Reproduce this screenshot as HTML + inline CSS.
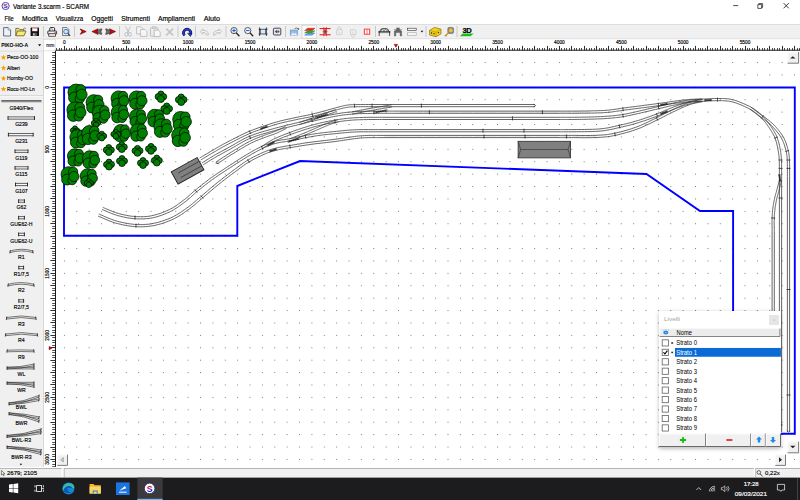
<!DOCTYPE html><html><head><meta charset="utf-8"><title>Variante 3.scarm - SCARM</title><style>
*{margin:0;padding:0;box-sizing:border-box}
html,body{width:800px;height:500px;overflow:hidden;background:#fff;font-family:"Liberation Sans",sans-serif;}
svg{position:absolute;left:0;top:0;font-family:"Liberation Sans",sans-serif;}
</style></head><body>
<svg width="800" height="500" viewBox="0 0 800 500">
<defs><pattern id="grid" x="-10.350" y="12.376" width="12.375" height="12.404" patternUnits="userSpaceOnUse"><rect x="0" y="0" width="1" height="1" fill="#7c7c7c"/></pattern>
<clipPath id="cv"><rect x="55.5" y="51" width="745" height="415.9"/></clipPath>
<linearGradient id="sg" x1="0" y1="0" x2="0" y2="1"><stop offset="0.45" stop-color="#d01818"/><stop offset="0.55" stop-color="#1818d0"/></linearGradient><filter id="sh" x="-10%" y="-10%" width="120%" height="120%"><feGaussianBlur stdDeviation="2"/></filter>
</defs>
<rect x="0" y="0" width="800" height="24" fill="#fff"/>
<rect x="0" y="24" width="800" height="15" fill="#f0f0f0"/>
<rect x="0" y="24" width="800" height="0.8" fill="#d9d9d9"/>
<rect x="0" y="38.6" width="800" height="0.8" fill="#d0d0d0"/>
<rect x="0" y="39.4" width="43.5" height="428" fill="#f0f0f0"/>
<rect x="43.5" y="39.4" width="757" height="11.6" fill="#fff"/>
<rect x="43.5" y="51" width="12" height="416" fill="#fff"/>
<rect x="43.2" y="39.4" width="0.8" height="428" fill="#cfcfcf"/>
<circle cx="5.6" cy="6" r="3.6" fill="#f4f4ff" stroke="#3a3ab0" stroke-width="0.9"/>
<text x="5.60" y="8.32" font-size="6.20" fill="url(#sg)" font-weight="bold" text-anchor="middle" >S</text>
<text x="13.00" y="8.66" font-size="6.60" fill="#000" textLength="76.00" lengthAdjust="spacingAndGlyphs" stroke="#000" stroke-width="0.16" >Variante 3.scarm - SCARM</text>
<path d="M733.2 5.6h5" stroke="#111" stroke-width="0.75" fill="none"/>
<path d="M757.8 4.6h3.8v3.8h-3.8zM758.8 4.6v-1h3.8v3.8h-1" stroke="#111" stroke-width="0.7" fill="none"/>
<path d="M783.6 3.1l5.2 5.2M788.8 3.1l-5.2 5.2" stroke="#111" stroke-width="0.8" fill="none"/>
<text x="4.50" y="20.83" font-size="6.50" fill="#000" textLength="9.30" lengthAdjust="spacingAndGlyphs" stroke="#000" stroke-width="0.16" >File</text>
<text x="22.00" y="20.83" font-size="6.50" fill="#000" textLength="25.50" lengthAdjust="spacingAndGlyphs" stroke="#000" stroke-width="0.16" >Modifica</text>
<text x="55.70" y="20.83" font-size="6.50" fill="#000" textLength="27.60" lengthAdjust="spacingAndGlyphs" stroke="#000" stroke-width="0.16" >Visualizza</text>
<text x="91.20" y="20.83" font-size="6.50" fill="#000" textLength="21.80" lengthAdjust="spacingAndGlyphs" stroke="#000" stroke-width="0.16" >Oggetti</text>
<text x="121.20" y="20.83" font-size="6.50" fill="#000" textLength="28.80" lengthAdjust="spacingAndGlyphs" stroke="#000" stroke-width="0.16" >Strumenti</text>
<text x="158.00" y="20.83" font-size="6.50" fill="#000" textLength="37.00" lengthAdjust="spacingAndGlyphs" stroke="#000" stroke-width="0.16" >Ampliamenti</text>
<text x="203.70" y="20.83" font-size="6.50" fill="#000" textLength="16.30" lengthAdjust="spacingAndGlyphs" stroke="#000" stroke-width="0.16" >Aiuto</text>
<path d="M64.50 50.30v-4.40M76.50 50.30v-4.40M89.50 50.30v-4.40M101.50 50.30v-4.40M113.50 50.30v-4.40M126.50 50.30v-4.40M138.50 50.30v-4.40M151.50 50.30v-4.40M163.50 50.30v-4.40M175.50 50.30v-4.40M188.50 50.30v-4.40M200.50 50.30v-4.40M212.50 50.30v-4.40M225.50 50.30v-4.40M237.50 50.30v-4.40M250.50 50.30v-4.40M262.50 50.30v-4.40M274.50 50.30v-4.40M287.50 50.30v-4.40M299.50 50.30v-4.40M311.50 50.30v-4.40M324.50 50.30v-4.40M336.50 50.30v-4.40M349.50 50.30v-4.40M361.50 50.30v-4.40M373.50 50.30v-4.40M386.50 50.30v-4.40M398.50 50.30v-4.40M410.50 50.30v-4.40M423.50 50.30v-4.40M435.50 50.30v-4.40M448.50 50.30v-4.40M460.50 50.30v-4.40M472.50 50.30v-4.40M485.50 50.30v-4.40M497.50 50.30v-4.40M509.50 50.30v-4.40M522.50 50.30v-4.40M534.50 50.30v-4.40M547.50 50.30v-4.40M559.50 50.30v-4.40M571.50 50.30v-4.40M584.50 50.30v-4.40M596.50 50.30v-4.40M608.50 50.30v-4.40M621.50 50.30v-4.40M633.50 50.30v-4.40M646.50 50.30v-4.40M658.50 50.30v-4.40M670.50 50.30v-4.40M683.50 50.30v-4.40M695.50 50.30v-4.40M707.50 50.30v-4.40M720.50 50.30v-4.40M732.50 50.30v-4.40M745.50 50.30v-4.40M757.50 50.30v-4.40M769.50 50.30v-4.40M782.50 50.30v-4.40M794.50 50.30v-4.40" stroke="#1a1a1a" stroke-width="0.9" fill="none"/>
<path d="M56.50 50.30v-2.30M59.50 50.30v-2.30M61.50 50.30v-2.30M66.50 50.30v-2.30M69.50 50.30v-2.30M71.50 50.30v-2.30M74.50 50.30v-2.30M79.50 50.30v-2.30M81.50 50.30v-2.30M84.50 50.30v-2.30M86.50 50.30v-2.30M91.50 50.30v-2.30M94.50 50.30v-2.30M96.50 50.30v-2.30M99.50 50.30v-2.30M104.50 50.30v-2.30M106.50 50.30v-2.30M108.50 50.30v-2.30M111.50 50.30v-2.30M116.50 50.30v-2.30M118.50 50.30v-2.30M121.50 50.30v-2.30M123.50 50.30v-2.30M128.50 50.30v-2.30M131.50 50.30v-2.30M133.50 50.30v-2.30M136.50 50.30v-2.30M141.50 50.30v-2.30M143.50 50.30v-2.30M146.50 50.30v-2.30M148.50 50.30v-2.30M153.50 50.30v-2.30M155.50 50.30v-2.30M158.50 50.30v-2.30M160.50 50.30v-2.30M165.50 50.30v-2.30M168.50 50.30v-2.30M170.50 50.30v-2.30M173.50 50.30v-2.30M178.50 50.30v-2.30M180.50 50.30v-2.30M183.50 50.30v-2.30M185.50 50.30v-2.30M190.50 50.30v-2.30M193.50 50.30v-2.30M195.50 50.30v-2.30M198.50 50.30v-2.30M203.50 50.30v-2.30M205.50 50.30v-2.30M207.50 50.30v-2.30M210.50 50.30v-2.30M215.50 50.30v-2.30M217.50 50.30v-2.30M220.50 50.30v-2.30M222.50 50.30v-2.30M227.50 50.30v-2.30M230.50 50.30v-2.30M232.50 50.30v-2.30M235.50 50.30v-2.30M240.50 50.30v-2.30M242.50 50.30v-2.30M245.50 50.30v-2.30M247.50 50.30v-2.30M252.50 50.30v-2.30M254.50 50.30v-2.30M257.50 50.30v-2.30M259.50 50.30v-2.30M264.50 50.30v-2.30M267.50 50.30v-2.30M269.50 50.30v-2.30M272.50 50.30v-2.30M277.50 50.30v-2.30M279.50 50.30v-2.30M282.50 50.30v-2.30M284.50 50.30v-2.30M289.50 50.30v-2.30M292.50 50.30v-2.30M294.50 50.30v-2.30M297.50 50.30v-2.30M302.50 50.30v-2.30M304.50 50.30v-2.30M306.50 50.30v-2.30M309.50 50.30v-2.30M314.50 50.30v-2.30M316.50 50.30v-2.30M319.50 50.30v-2.30M321.50 50.30v-2.30M326.50 50.30v-2.30M329.50 50.30v-2.30M331.50 50.30v-2.30M334.50 50.30v-2.30M339.50 50.30v-2.30M341.50 50.30v-2.30M344.50 50.30v-2.30M346.50 50.30v-2.30M351.50 50.30v-2.30M353.50 50.30v-2.30M356.50 50.30v-2.30M358.50 50.30v-2.30M363.50 50.30v-2.30M366.50 50.30v-2.30M368.50 50.30v-2.30M371.50 50.30v-2.30M376.50 50.30v-2.30M378.50 50.30v-2.30M381.50 50.30v-2.30M383.50 50.30v-2.30M388.50 50.30v-2.30M391.50 50.30v-2.30M393.50 50.30v-2.30M396.50 50.30v-2.30M401.50 50.30v-2.30M403.50 50.30v-2.30M405.50 50.30v-2.30M408.50 50.30v-2.30M413.50 50.30v-2.30M415.50 50.30v-2.30M418.50 50.30v-2.30M420.50 50.30v-2.30M425.50 50.30v-2.30M428.50 50.30v-2.30M430.50 50.30v-2.30M433.50 50.30v-2.30M438.50 50.30v-2.30M440.50 50.30v-2.30M443.50 50.30v-2.30M445.50 50.30v-2.30M450.50 50.30v-2.30M452.50 50.30v-2.30M455.50 50.30v-2.30M457.50 50.30v-2.30M462.50 50.30v-2.30M465.50 50.30v-2.30M467.50 50.30v-2.30M470.50 50.30v-2.30M475.50 50.30v-2.30M477.50 50.30v-2.30M480.50 50.30v-2.30M482.50 50.30v-2.30M487.50 50.30v-2.30M490.50 50.30v-2.30M492.50 50.30v-2.30M495.50 50.30v-2.30M500.50 50.30v-2.30M502.50 50.30v-2.30M504.50 50.30v-2.30M507.50 50.30v-2.30M512.50 50.30v-2.30M514.50 50.30v-2.30M517.50 50.30v-2.30M519.50 50.30v-2.30M524.50 50.30v-2.30M527.50 50.30v-2.30M529.50 50.30v-2.30M532.50 50.30v-2.30M537.50 50.30v-2.30M539.50 50.30v-2.30M542.50 50.30v-2.30M544.50 50.30v-2.30M549.50 50.30v-2.30M551.50 50.30v-2.30M554.50 50.30v-2.30M556.50 50.30v-2.30M561.50 50.30v-2.30M564.50 50.30v-2.30M566.50 50.30v-2.30M569.50 50.30v-2.30M574.50 50.30v-2.30M576.50 50.30v-2.30M579.50 50.30v-2.30M581.50 50.30v-2.30M586.50 50.30v-2.30M589.50 50.30v-2.30M591.50 50.30v-2.30M594.50 50.30v-2.30M599.50 50.30v-2.30M601.50 50.30v-2.30M603.50 50.30v-2.30M606.50 50.30v-2.30M611.50 50.30v-2.30M613.50 50.30v-2.30M616.50 50.30v-2.30M618.50 50.30v-2.30M623.50 50.30v-2.30M626.50 50.30v-2.30M628.50 50.30v-2.30M631.50 50.30v-2.30M636.50 50.30v-2.30M638.50 50.30v-2.30M641.50 50.30v-2.30M643.50 50.30v-2.30M648.50 50.30v-2.30M650.50 50.30v-2.30M653.50 50.30v-2.30M655.50 50.30v-2.30M660.50 50.30v-2.30M663.50 50.30v-2.30M665.50 50.30v-2.30M668.50 50.30v-2.30M673.50 50.30v-2.30M675.50 50.30v-2.30M678.50 50.30v-2.30M680.50 50.30v-2.30M685.50 50.30v-2.30M688.50 50.30v-2.30M690.50 50.30v-2.30M693.50 50.30v-2.30M698.50 50.30v-2.30M700.50 50.30v-2.30M702.50 50.30v-2.30M705.50 50.30v-2.30M710.50 50.30v-2.30M712.50 50.30v-2.30M715.50 50.30v-2.30M717.50 50.30v-2.30M722.50 50.30v-2.30M725.50 50.30v-2.30M727.50 50.30v-2.30M730.50 50.30v-2.30M735.50 50.30v-2.30M737.50 50.30v-2.30M740.50 50.30v-2.30M742.50 50.30v-2.30M747.50 50.30v-2.30M749.50 50.30v-2.30M752.50 50.30v-2.30M754.50 50.30v-2.30M759.50 50.30v-2.30M762.50 50.30v-2.30M764.50 50.30v-2.30M767.50 50.30v-2.30M772.50 50.30v-2.30M774.50 50.30v-2.30M777.50 50.30v-2.30M779.50 50.30v-2.30M784.50 50.30v-2.30M787.50 50.30v-2.30M789.50 50.30v-2.30M792.50 50.30v-2.30M797.50 50.30v-2.30M799.50 50.30v-2.30" stroke="#3c3c3c" stroke-width="0.9" fill="none"/>
<rect x="55.4" y="49.75" width="745" height="0.9" fill="#000"/>
<path d="M55.20 62.50h-4.80M55.20 74.50h-4.80M55.20 87.50h-4.80M55.20 99.50h-4.80M55.20 112.50h-4.80M55.20 124.50h-4.80M55.20 136.50h-4.80M55.20 149.50h-4.80M55.20 161.50h-4.80M55.20 174.50h-4.80M55.20 186.50h-4.80M55.20 198.50h-4.80M55.20 211.50h-4.80M55.20 223.50h-4.80M55.20 236.50h-4.80M55.20 248.50h-4.80M55.20 260.50h-4.80M55.20 273.50h-4.80M55.20 285.50h-4.80M55.20 298.50h-4.80M55.20 310.50h-4.80M55.20 322.50h-4.80M55.20 335.50h-4.80M55.20 347.50h-4.80M55.20 360.50h-4.80M55.20 372.50h-4.80M55.20 384.50h-4.80M55.20 397.50h-4.80M55.20 409.50h-4.80M55.20 422.50h-4.80M55.20 434.50h-4.80M55.20 447.50h-4.80M55.20 459.50h-4.80" stroke="#1a1a1a" stroke-width="0.9" fill="none"/>
<path d="M55.20 52.50h-3.00M55.20 55.50h-3.00M55.20 57.50h-3.00M55.20 60.50h-3.00M55.20 64.50h-3.00M55.20 67.50h-3.00M55.20 69.50h-3.00M55.20 72.50h-3.00M55.20 77.50h-3.00M55.20 79.50h-3.00M55.20 82.50h-3.00M55.20 84.50h-3.00M55.20 89.50h-3.00M55.20 92.50h-3.00M55.20 94.50h-3.00M55.20 97.50h-3.00M55.20 102.50h-3.00M55.20 104.50h-3.00M55.20 107.50h-3.00M55.20 109.50h-3.00M55.20 114.50h-3.00M55.20 117.50h-3.00M55.20 119.50h-3.00M55.20 122.50h-3.00M55.20 126.50h-3.00M55.20 129.50h-3.00M55.20 131.50h-3.00M55.20 134.50h-3.00M55.20 139.50h-3.00M55.20 141.50h-3.00M55.20 144.50h-3.00M55.20 146.50h-3.00M55.20 151.50h-3.00M55.20 154.50h-3.00M55.20 156.50h-3.00M55.20 159.50h-3.00M55.20 164.50h-3.00M55.20 166.50h-3.00M55.20 169.50h-3.00M55.20 171.50h-3.00M55.20 176.50h-3.00M55.20 179.50h-3.00M55.20 181.50h-3.00M55.20 184.50h-3.00M55.20 189.50h-3.00M55.20 191.50h-3.00M55.20 193.50h-3.00M55.20 196.50h-3.00M55.20 201.50h-3.00M55.20 203.50h-3.00M55.20 206.50h-3.00M55.20 208.50h-3.00M55.20 213.50h-3.00M55.20 216.50h-3.00M55.20 218.50h-3.00M55.20 221.50h-3.00M55.20 226.50h-3.00M55.20 228.50h-3.00M55.20 231.50h-3.00M55.20 233.50h-3.00M55.20 238.50h-3.00M55.20 241.50h-3.00M55.20 243.50h-3.00M55.20 246.50h-3.00M55.20 251.50h-3.00M55.20 253.50h-3.00M55.20 255.50h-3.00M55.20 258.50h-3.00M55.20 263.50h-3.00M55.20 265.50h-3.00M55.20 268.50h-3.00M55.20 270.50h-3.00M55.20 275.50h-3.00M55.20 278.50h-3.00M55.20 280.50h-3.00M55.20 283.50h-3.00M55.20 288.50h-3.00M55.20 290.50h-3.00M55.20 293.50h-3.00M55.20 295.50h-3.00M55.20 300.50h-3.00M55.20 303.50h-3.00M55.20 305.50h-3.00M55.20 308.50h-3.00M55.20 313.50h-3.00M55.20 315.50h-3.00M55.20 318.50h-3.00M55.20 320.50h-3.00M55.20 325.50h-3.00M55.20 327.50h-3.00M55.20 330.50h-3.00M55.20 332.50h-3.00M55.20 337.50h-3.00M55.20 340.50h-3.00M55.20 342.50h-3.00M55.20 345.50h-3.00M55.20 350.50h-3.00M55.20 352.50h-3.00M55.20 355.50h-3.00M55.20 357.50h-3.00M55.20 362.50h-3.00M55.20 365.50h-3.00M55.20 367.50h-3.00M55.20 370.50h-3.00M55.20 375.50h-3.00M55.20 377.50h-3.00M55.20 380.50h-3.00M55.20 382.50h-3.00M55.20 387.50h-3.00M55.20 389.50h-3.00M55.20 392.50h-3.00M55.20 394.50h-3.00M55.20 399.50h-3.00M55.20 402.50h-3.00M55.20 404.50h-3.00M55.20 407.50h-3.00M55.20 412.50h-3.00M55.20 414.50h-3.00M55.20 417.50h-3.00M55.20 419.50h-3.00M55.20 424.50h-3.00M55.20 427.50h-3.00M55.20 429.50h-3.00M55.20 432.50h-3.00M55.20 437.50h-3.00M55.20 439.50h-3.00M55.20 442.50h-3.00M55.20 444.50h-3.00M55.20 449.50h-3.00M55.20 451.50h-3.00M55.20 454.50h-3.00M55.20 456.50h-3.00M55.20 461.50h-3.00M55.20 464.50h-3.00M55.20 466.50h-3.00" stroke="#3c3c3c" stroke-width="0.9" fill="none"/>
<rect x="55" y="50" width="0.9" height="417" fill="#000"/>
<text x="64.40" y="44.02" font-size="4.80" fill="#000" text-anchor="middle" stroke="#000" stroke-width="0.16" >0</text>
<text x="126.28" y="44.02" font-size="4.80" fill="#000" text-anchor="middle" stroke="#000" stroke-width="0.16" >500</text>
<text x="188.15" y="44.02" font-size="4.80" fill="#000" text-anchor="middle" stroke="#000" stroke-width="0.16" >1000</text>
<text x="250.03" y="44.02" font-size="4.80" fill="#000" text-anchor="middle" stroke="#000" stroke-width="0.16" >1500</text>
<text x="311.90" y="44.02" font-size="4.80" fill="#000" text-anchor="middle" stroke="#000" stroke-width="0.16" >2000</text>
<text x="373.77" y="44.02" font-size="4.80" fill="#000" text-anchor="middle" stroke="#000" stroke-width="0.16" >2500</text>
<text x="435.65" y="44.02" font-size="4.80" fill="#000" text-anchor="middle" stroke="#000" stroke-width="0.16" >3000</text>
<text x="497.52" y="44.02" font-size="4.80" fill="#000" text-anchor="middle" stroke="#000" stroke-width="0.16" >3500</text>
<text x="559.40" y="44.02" font-size="4.80" fill="#000" text-anchor="middle" stroke="#000" stroke-width="0.16" >4000</text>
<text x="621.27" y="44.02" font-size="4.80" fill="#000" text-anchor="middle" stroke="#000" stroke-width="0.16" >4500</text>
<text x="683.15" y="44.02" font-size="4.80" fill="#000" text-anchor="middle" stroke="#000" stroke-width="0.16" >5000</text>
<text x="745.02" y="44.02" font-size="4.80" fill="#000" text-anchor="middle" stroke="#000" stroke-width="0.16" >5500</text>
<g transform="translate(47.2 87.30) rotate(-90)"><text x="0.00" y="1.72" font-size="4.80" fill="#000" text-anchor="middle" stroke="#000" stroke-width="0.16" >0</text></g>
<g transform="translate(47.2 149.32) rotate(-90)"><text x="0.00" y="1.72" font-size="4.80" fill="#000" text-anchor="middle" stroke="#000" stroke-width="0.16" >500</text></g>
<g transform="translate(47.2 211.34) rotate(-90)"><text x="0.00" y="1.72" font-size="4.80" fill="#000" text-anchor="middle" stroke="#000" stroke-width="0.16" >1000</text></g>
<g transform="translate(47.2 273.36) rotate(-90)"><text x="0.00" y="1.72" font-size="4.80" fill="#000" text-anchor="middle" stroke="#000" stroke-width="0.16" >1500</text></g>
<g transform="translate(47.2 335.38) rotate(-90)"><text x="0.00" y="1.72" font-size="4.80" fill="#000" text-anchor="middle" stroke="#000" stroke-width="0.16" >2000</text></g>
<g transform="translate(47.2 397.40) rotate(-90)"><text x="0.00" y="1.72" font-size="4.80" fill="#000" text-anchor="middle" stroke="#000" stroke-width="0.16" >2500</text></g>
<g transform="translate(47.2 459.42) rotate(-90)"><text x="0.00" y="1.72" font-size="4.80" fill="#000" text-anchor="middle" stroke="#000" stroke-width="0.16" >3000</text></g>
<rect x="43.6" y="39.5" width="11.6" height="11.3" fill="#fff" stroke="#d4d4d4" stroke-width="0.6"/>
<text x="50.30" y="47.15" font-size="4.90" fill="#223" text-anchor="middle" stroke="#223" stroke-width="0.16" >mm</text>
<path d="M394 44.2h3.8l-1.9 3.2z" fill="#e00000" stroke="#400" stroke-width="0.3"/>
<path d="M49 346.3v3.6l3.2 -1.8z" fill="#e00000" stroke="#400" stroke-width="0.3"/>
<rect x="0" y="39.4" width="43.2" height="11.4" fill="#f0f0f0"/>
<text x="1.20" y="47.30" font-size="5.60" fill="#000" textLength="27.00" lengthAdjust="spacingAndGlyphs" font-weight="bold" >PIKO-HO-A</text>
<path d="M38.1 44.3h3l-1.5 1.9z" fill="#000"/>
<rect x="0" y="50.8" width="43.2" height="0.6" fill="#d0d0d0"/>
<polygon points="3.50,54.50 4.23,56.39 6.26,56.50 4.69,57.79 5.20,59.75 3.50,58.65 1.80,59.75 2.31,57.79 0.74,56.50 2.77,56.39" fill="#ff9a00"/>
<text x="7.00" y="59.24" font-size="5.70" fill="#000" textLength="31.20" lengthAdjust="spacingAndGlyphs" stroke="#000" stroke-width="0.16" >Peco-OO-100</text>
<polygon points="3.50,65.05 4.23,66.94 6.26,67.05 4.69,68.34 5.20,70.30 3.50,69.20 1.80,70.30 2.31,68.34 0.74,67.05 2.77,66.94" fill="#ff9a00"/>
<text x="7.00" y="69.79" font-size="5.70" fill="#000" textLength="12.80" lengthAdjust="spacingAndGlyphs" stroke="#000" stroke-width="0.16" >Alberi</text>
<polygon points="3.50,75.60 4.23,77.49 6.26,77.60 4.69,78.89 5.20,80.85 3.50,79.75 1.80,80.85 2.31,78.89 0.74,77.60 2.77,77.49" fill="#ff9a00"/>
<text x="7.00" y="80.34" font-size="5.70" fill="#000" textLength="26.00" lengthAdjust="spacingAndGlyphs" stroke="#000" stroke-width="0.16" >Hornby-OO</text>
<polygon points="3.50,86.15 4.23,88.04 6.26,88.15 4.69,89.44 5.20,91.40 3.50,90.30 1.80,91.40 2.31,89.44 0.74,88.15 2.77,88.04" fill="#ff9a00"/>
<text x="7.00" y="90.89" font-size="5.70" fill="#000" textLength="27.80" lengthAdjust="spacingAndGlyphs" stroke="#000" stroke-width="0.16" >Roco-HO-Ln</text>
<rect x="0" y="95.3" width="43.2" height="0.7" fill="#cfcfcf"/><rect x="0" y="96" width="43.2" height="0.6" fill="#fbfbfb"/>
<rect x="1.3" y="100.20" width="40.2" height="1.5" fill="#4a4a4a"/>
<rect x="1.3" y="101.70" width="40.2" height="0.8" fill="#b0b0b0"/>
<text x="21.40" y="109.64" font-size="5.70" fill="#000" textLength="23.67" lengthAdjust="spacingAndGlyphs" text-anchor="middle" stroke="#000" stroke-width="0.16" >G940/Flex</text>
<rect x="8.0" y="116.92" width="26.5" height="2.2" fill="#fafafa"/><path d="M8.0 116.92H34.5M8.0 119.12H34.5" stroke="#111" stroke-width="0.65" fill="none"/><path d="M8.0 116.12v3.8M34.5 116.12v3.8" stroke="#000" stroke-width="0.8" fill="none"/>
<text x="21.40" y="126.26" font-size="5.70" fill="#000" textLength="12.55" lengthAdjust="spacingAndGlyphs" text-anchor="middle" stroke="#000" stroke-width="0.16" >G239</text>
<rect x="8.4" y="133.54" width="24.8" height="2.2" fill="#fafafa"/><path d="M8.4 133.54H33.2M8.4 135.74H33.2" stroke="#111" stroke-width="0.65" fill="none"/><path d="M8.4 132.74v3.8M33.2 132.74v3.8" stroke="#000" stroke-width="0.8" fill="none"/>
<text x="21.40" y="142.88" font-size="5.70" fill="#000" textLength="12.55" lengthAdjust="spacingAndGlyphs" text-anchor="middle" stroke="#000" stroke-width="0.16" >G231</text>
<rect x="15.0" y="150.16" width="13.0" height="2.2" fill="#fafafa"/><path d="M15.0 150.16H28.0M15.0 152.36H28.0" stroke="#111" stroke-width="0.65" fill="none"/><path d="M15.0 149.36v3.8M28.0 149.36v3.8" stroke="#000" stroke-width="0.8" fill="none"/>
<text x="21.40" y="159.50" font-size="5.70" fill="#000" textLength="12.17" lengthAdjust="spacingAndGlyphs" text-anchor="middle" stroke="#000" stroke-width="0.16" >G119</text>
<rect x="15.0" y="166.78" width="13.0" height="2.2" fill="#fafafa"/><path d="M15.0 166.78H28.0M15.0 168.98H28.0" stroke="#111" stroke-width="0.65" fill="none"/><path d="M15.0 165.98v3.8M28.0 165.98v3.8" stroke="#000" stroke-width="0.8" fill="none"/>
<text x="21.40" y="176.12" font-size="5.70" fill="#000" textLength="12.17" lengthAdjust="spacingAndGlyphs" text-anchor="middle" stroke="#000" stroke-width="0.16" >G115</text>
<rect x="15.5" y="183.40" width="12.0" height="2.2" fill="#fafafa"/><path d="M15.5 183.40H27.5M15.5 185.60H27.5" stroke="#111" stroke-width="0.65" fill="none"/><path d="M15.5 182.60v3.8M27.5 182.60v3.8" stroke="#000" stroke-width="0.8" fill="none"/>
<text x="21.40" y="192.74" font-size="5.70" fill="#000" textLength="12.55" lengthAdjust="spacingAndGlyphs" text-anchor="middle" stroke="#000" stroke-width="0.16" >G107</text>
<rect x="18.6" y="200.02" width="5.8" height="2.2" fill="#fafafa"/><path d="M18.6 200.02H24.4M18.6 202.22H24.4" stroke="#111" stroke-width="0.65" fill="none"/><path d="M18.6 199.22v3.8M24.4 199.22v3.8" stroke="#000" stroke-width="0.8" fill="none"/>
<text x="21.40" y="209.36" font-size="5.70" fill="#000" textLength="9.70" lengthAdjust="spacingAndGlyphs" text-anchor="middle" stroke="#000" stroke-width="0.16" >G62</text>
<rect x="18.6" y="216.64" width="5.8" height="2.2" fill="#fafafa"/><path d="M18.6 216.64H24.4M18.6 218.84H24.4" stroke="#111" stroke-width="0.65" fill="none"/><path d="M18.6 215.84v3.8M24.4 215.84v3.8" stroke="#000" stroke-width="0.8" fill="none"/>
<text x="21.40" y="225.98" font-size="5.70" fill="#000" textLength="22.24" lengthAdjust="spacingAndGlyphs" text-anchor="middle" stroke="#000" stroke-width="0.16" >GUE62-H</text>
<rect x="18.6" y="233.26" width="5.8" height="2.2" fill="#fafafa"/><path d="M18.6 233.26H24.4M18.6 235.46H24.4" stroke="#111" stroke-width="0.65" fill="none"/><path d="M18.6 232.46v3.8M24.4 232.46v3.8" stroke="#000" stroke-width="0.8" fill="none"/>
<text x="21.40" y="242.60" font-size="5.70" fill="#000" textLength="22.24" lengthAdjust="spacingAndGlyphs" text-anchor="middle" stroke="#000" stroke-width="0.16" >GUE62-U</text>
<path d="M10.0 250.98Q21.5 247.58 33.0 250.98M10.0 252.58Q21.5 249.18 33.0 252.58" stroke="#222" stroke-width="0.6" fill="none"/><path d="M10.3 250.18l-0.5 3.2M32.7 250.18l0.5 3.2" stroke="#111" stroke-width="0.8" fill="none"/>
<text x="21.40" y="259.22" font-size="5.70" fill="#000" textLength="6.56" lengthAdjust="spacingAndGlyphs" text-anchor="middle" stroke="#000" stroke-width="0.16" >R1</text>
<rect x="18.8" y="266.50" width="4.8" height="2.2" fill="#fafafa"/><path d="M18.8 266.50H23.6M18.8 268.70H23.6" stroke="#111" stroke-width="0.65" fill="none"/><path d="M18.8 265.70v3.8M23.6 265.70v3.8" stroke="#000" stroke-width="0.8" fill="none"/>
<text x="21.40" y="275.84" font-size="5.70" fill="#000" textLength="15.11" lengthAdjust="spacingAndGlyphs" text-anchor="middle" stroke="#000" stroke-width="0.16" >R1/7,5</text>
<path d="M8.0 284.32Q21.0 280.92 34.0 284.32M8.0 285.92Q21.0 282.52 34.0 285.92" stroke="#222" stroke-width="0.6" fill="none"/><path d="M8.3 283.52l-0.5 3.2M33.7 283.52l0.5 3.2" stroke="#111" stroke-width="0.8" fill="none"/>
<text x="21.40" y="292.46" font-size="5.70" fill="#000" textLength="6.56" lengthAdjust="spacingAndGlyphs" text-anchor="middle" stroke="#000" stroke-width="0.16" >R2</text>
<rect x="18.8" y="299.74" width="4.8" height="2.2" fill="#fafafa"/><path d="M18.8 299.74H23.6M18.8 301.94H23.6" stroke="#111" stroke-width="0.65" fill="none"/><path d="M18.8 298.94v3.8M23.6 298.94v3.8" stroke="#000" stroke-width="0.8" fill="none"/>
<text x="21.40" y="309.08" font-size="5.70" fill="#000" textLength="15.11" lengthAdjust="spacingAndGlyphs" text-anchor="middle" stroke="#000" stroke-width="0.16" >R2/7,5</text>
<path d="M6.5 317.46Q21.2 314.46 36.0 317.46M6.5 319.06Q21.2 316.06 36.0 319.06" stroke="#222" stroke-width="0.6" fill="none"/><path d="M6.8 316.66l-0.5 3.2M35.7 316.66l0.5 3.2" stroke="#111" stroke-width="0.8" fill="none"/>
<text x="21.40" y="325.70" font-size="5.70" fill="#000" textLength="6.56" lengthAdjust="spacingAndGlyphs" text-anchor="middle" stroke="#000" stroke-width="0.16" >R3</text>
<path d="M5.5 334.08Q21.5 331.08 37.5 334.08M5.5 335.68Q21.5 332.68 37.5 335.68" stroke="#222" stroke-width="0.6" fill="none"/><path d="M5.8 333.28l-0.5 3.2M37.2 333.28l0.5 3.2" stroke="#111" stroke-width="0.8" fill="none"/>
<text x="21.40" y="342.32" font-size="5.70" fill="#000" textLength="6.56" lengthAdjust="spacingAndGlyphs" text-anchor="middle" stroke="#000" stroke-width="0.16" >R4</text>
<path d="M7.0 350.20Q20.5 349.60 34.0 350.20M7.0 351.80Q20.5 351.20 34.0 351.80" stroke="#222" stroke-width="0.6" fill="none"/><path d="M7.3 349.40l-0.5 3.2M33.7 349.40l0.5 3.2" stroke="#111" stroke-width="0.8" fill="none"/>
<text x="21.40" y="358.94" font-size="5.70" fill="#000" textLength="6.56" lengthAdjust="spacingAndGlyphs" text-anchor="middle" stroke="#000" stroke-width="0.16" >R9</text>
<path d="M7.0 367.32H34.0M7.0 368.92H34.0M7.0 367.32Q20.5 367.32 34.0 364.12M7.0 368.92Q20.5 368.92 34.0 365.72" stroke="#222" stroke-width="0.6" fill="none"/><path d="M7.0 366.42v3.4M34.0 366.42v3.4M34.0 363.22v3.4" stroke="#111" stroke-width="0.8" fill="none"/>
<text x="21.40" y="375.56" font-size="5.70" fill="#000" textLength="7.70" lengthAdjust="spacingAndGlyphs" text-anchor="middle" stroke="#000" stroke-width="0.16" >WL</text>
<path d="M7.0 382.34H34.0M7.0 383.94H34.0M7.0 382.34Q20.5 382.34 34.0 385.54M7.0 383.94Q20.5 383.94 34.0 387.14" stroke="#222" stroke-width="0.6" fill="none"/><path d="M7.0 381.44v3.4M34.0 381.44v3.4M34.0 384.64v3.4" stroke="#111" stroke-width="0.8" fill="none"/>
<text x="21.40" y="392.18" font-size="5.70" fill="#000" textLength="8.55" lengthAdjust="spacingAndGlyphs" text-anchor="middle" stroke="#000" stroke-width="0.16" >WR</text>
<path d="M9.0 402.96Q24.0 401.84 39.0 395.46M9.0 404.56Q24.0 403.44 39.0 397.06M9.0 402.96Q24.0 402.36 39.0 398.96M9.0 404.56Q24.0 403.96 39.0 400.56" stroke="#222" stroke-width="0.6" fill="none"/><path d="M9.0 402.06v3.4M39.3 394.66l-0.6 3.2M39.3 398.16l-0.6 3.2" stroke="#111" stroke-width="0.8" fill="none"/>
<text x="21.40" y="408.80" font-size="5.70" fill="#000" textLength="11.12" lengthAdjust="spacingAndGlyphs" text-anchor="middle" stroke="#000" stroke-width="0.16" >BWL</text>
<path d="M9.0 412.88Q24.0 414.01 39.0 420.38M9.0 414.48Q24.0 415.61 39.0 421.98M9.0 412.88Q24.0 413.48 39.0 416.88M9.0 414.48Q24.0 415.08 39.0 418.48" stroke="#222" stroke-width="0.6" fill="none"/><path d="M9.0 411.98v3.4M39.3 419.58l-0.6 3.2M39.3 416.08l-0.6 3.2" stroke="#111" stroke-width="0.8" fill="none"/>
<text x="21.40" y="425.42" font-size="5.70" fill="#000" textLength="11.97" lengthAdjust="spacingAndGlyphs" text-anchor="middle" stroke="#000" stroke-width="0.16" >BWR</text>
<path d="M7.0 435.50Q24.0 434.53 41.0 429.00M7.0 437.10Q24.0 436.13 41.0 430.60M7.0 435.50Q24.0 434.98 41.0 432.00M7.0 437.10Q24.0 436.58 41.0 433.60" stroke="#222" stroke-width="0.6" fill="none"/><path d="M7.0 434.60v3.4M41.3 428.20l-0.6 3.2M41.3 431.20l-0.6 3.2" stroke="#111" stroke-width="0.8" fill="none"/>
<text x="21.40" y="442.04" font-size="5.70" fill="#000" textLength="19.38" lengthAdjust="spacingAndGlyphs" text-anchor="middle" stroke="#000" stroke-width="0.16" >BWL-R3</text>
<path d="M7.0 446.42Q24.0 447.40 41.0 452.92M7.0 448.02Q24.0 449.00 41.0 454.52M7.0 446.42Q24.0 446.95 41.0 449.92M7.0 448.02Q24.0 448.55 41.0 451.52" stroke="#222" stroke-width="0.6" fill="none"/><path d="M7.0 445.52v3.4M41.3 452.12l-0.6 3.2M41.3 449.12l-0.6 3.2" stroke="#111" stroke-width="0.8" fill="none"/>
<text x="21.40" y="458.66" font-size="5.70" fill="#000" textLength="20.24" lengthAdjust="spacingAndGlyphs" text-anchor="middle" stroke="#000" stroke-width="0.16" >BWR-R3</text>
<path d="M19.6 463.8h2.6l-1.3 1.4z" fill="#000"/>
<rect x="43.15" y="26" width="0.7" height="11" fill="#b8b8b8"/>
<rect x="74.25" y="26" width="0.7" height="11" fill="#b8b8b8"/>
<rect x="119.25" y="26" width="0.7" height="11" fill="#b8b8b8"/>
<rect x="177.65" y="26" width="0.7" height="11" fill="#b8b8b8"/>
<rect x="195.25" y="26" width="0.7" height="11" fill="#b8b8b8"/>
<rect x="225.65" y="26" width="0.7" height="11" fill="#b8b8b8"/>
<rect x="285.25" y="26" width="0.7" height="11" fill="#b8b8b8"/>
<rect x="375.25" y="26" width="0.7" height="11" fill="#b8b8b8"/>
<rect x="425.65" y="26" width="0.7" height="11" fill="#b8b8b8"/>
<rect x="456.65" y="26" width="0.7" height="11" fill="#b8b8b8"/>
<path d="M3.6 27.6h4.6l2.4 2.4v6h-7z" fill="#eaf1fb" stroke="#3c4450" stroke-width="0.75"/><path d="M8.2 27.6v2.4h2.4" fill="#fff" stroke="#3c4450" stroke-width="0.5"/>
<path d="M15.8 35.8v-7.4h3l1 1.2h4.2v1.6" fill="#f3e27a" stroke="#4a4520" stroke-width="0.7"/><path d="M15.8 35.8l1.8-4.8h8.4l-2 4.8z" fill="#f7ea6e" stroke="#4a4520" stroke-width="0.7"/><path d="M23.4 28.6q1.6-1.6 2.8 0.4" stroke="#333" stroke-width="0.5" fill="none"/>
<rect x="30.6" y="27.4" width="8.4" height="8.6" rx="0.6" fill="#111"/><rect x="32.2" y="27.6" width="5.2" height="3.6" fill="#fff"/><rect x="32.2" y="27.6" width="5.2" height="1.1" fill="#f07878"/><rect x="32.6" y="32.8" width="4.4" height="3.2" fill="#555"/><rect x="33.2" y="33.4" width="1.4" height="2" fill="#ddd"/>
<path d="M49.8 31.2v-2.6q0-1 1-1h2.8q1 0 1 1v2.6" fill="#fff" stroke="#111" stroke-width="0.9"/><path d="M51.6 28.6l1.2 1.8" stroke="#111" stroke-width="0.6"/><rect x="47.8" y="31" width="8.8" height="3.2" rx="0.5" fill="#f4f4f4" stroke="#111" stroke-width="0.8"/><rect x="48.8" y="33.8" width="6.8" height="2.4" fill="#fff" stroke="#111" stroke-width="0.7"/><rect x="54.4" y="32" width="1.6" height="0.8" fill="#e33"/>
<path d="M62.6 27.6h4.4l1.8 1.8v6.2h-6.2z" fill="#f4f7fb" stroke="#444" stroke-width="0.7"/><circle cx="66" cy="31.6" r="2.3" fill="#cfe4fa" stroke="#2a5fa8" stroke-width="0.8"/><path d="M67.8 33.4l2.4 2.6" stroke="#333" stroke-width="1.1"/>
<g transform="translate(83.00 31.60) scale(1 1)"><path d="M-2.8 -2.7l6 2.7l-6 2.7l1.7-2.7z" fill="#e00000" stroke="#300" stroke-width="0.55"/></g>
<g transform="translate(96.90 31.60) scale(-1 1)"><path d="M-5 -2.7q1.8 2.7 0 5.4h1.2l3.6-1.6v-2.2l-3.6-1.6z" fill="#6e6e6e" stroke="#151515" stroke-width="0.5"/><path d="M-1.2 -2.9l6.2 2.9l-6.2 2.9l1.2-2.9z" fill="#e00000" stroke="#300" stroke-width="0.5"/></g>
<g transform="translate(110.60 31.60) scale(1 1)"><path d="M-5 -2.7q1.8 2.7 0 5.4h1.2l3.6-1.6v-2.2l-3.6-1.6z" fill="#6e6e6e" stroke="#151515" stroke-width="0.5"/><path d="M-1.2 -2.9l6.2 2.9l-6.2 2.9l1.2-2.9z" fill="#e00000" stroke="#300" stroke-width="0.5"/></g>
<path d="M125.6 26.6l3.4 6.2M130.6 26.6l-3.4 6.2" stroke="#b4b4b4" stroke-width="0.8" fill="none"/><ellipse cx="126.3" cy="34.4" rx="1.5" ry="1.9" fill="none" stroke="#b4b4b4" stroke-width="0.8"/><ellipse cx="129.9" cy="34.4" rx="1.5" ry="1.9" fill="none" stroke="#b4b4b4" stroke-width="0.8"/>
<path d="M136.6 26.8h4.4l1.8 1.8v5.4h-6.2z" fill="#f6f6f6" stroke="#b4b4b4" stroke-width="0.8"/><path d="M140.4 29.4h4.6l2 2v5h-6.6z" fill="#f6f6f6" stroke="#b4b4b4" stroke-width="0.8"/>
<rect x="150.4" y="27.8" width="7.6" height="8.4" rx="0.7" fill="#ececec" stroke="#b4b4b4" stroke-width="0.8"/><rect x="152.4" y="26.8" width="3.6" height="1.7" fill="#e0e0e0" stroke="#b4b4b4" stroke-width="0.6"/><path d="M154.2 30.2h4.2l1.8 1.8v4.6h-6z" fill="#f8f8f8" stroke="#b4b4b4" stroke-width="0.8"/>
<path d="M166.2 28.6l7 6.8M173.2 28.6l-7 6.8" stroke="#c6c6c6" stroke-width="1.9" fill="none"/>
<path d="M184.6 35.4a3.6 3.6 0 1 1 5.8 -1" fill="none" stroke="#0a0a30" stroke-width="2.6"/><path d="M184.6 35.4a3.6 3.6 0 1 1 5.8 -1" fill="none" stroke="#1d3fd8" stroke-width="1.5"/><path d="M187.6 33.2h4.4l-1.6 3.4z" fill="#1d3fd8" stroke="#0a0a30" stroke-width="0.5"/>
<path d="M200.2 31.6l2.6-2.8v1.6q5.4-0.4 5.6 4.6h-2q-0.4-2.8-3.6-2.6v1.8z" fill="#f2f2f2" stroke="#b0b0b0" stroke-width="0.7"/>
<g transform="translate(421.8 0) scale(-1 1)"><path d="M200.2 31.6l2.6-2.8v1.6q5.4-0.4 5.6 4.6h-2q-0.4-2.8-3.6-2.6v1.8z" fill="#f2f2f2" stroke="#b0b0b0" stroke-width="0.7"/></g>
<path d="M236.20 32.80l3.2 3.4" stroke="#222" stroke-width="1.3"/>
<circle cx="234.00" cy="30.60" r="3.1" fill="#eef5ff" stroke="#333" stroke-width="0.8"/>
<path d="M232.20 30.60h3.6" stroke="#1a5ad0" stroke-width="1"/>
<path d="M234.00 28.80v3.6" stroke="#1a5ad0" stroke-width="1"/>
<path d="M249.95 32.80l3.2 3.4" stroke="#222" stroke-width="1.3"/>
<circle cx="247.75" cy="30.60" r="3.1" fill="#eef5ff" stroke="#333" stroke-width="0.8"/>
<path d="M245.95 30.60h3.6" stroke="#1a5ad0" stroke-width="1"/>
<rect x="260.2" y="29.2" width="5.6" height="4.8" fill="#dbe8f8" stroke="#123" stroke-width="0.7"/><path d="M259.6 27.4v8.6M266.4 27.4v8.6M258.6 29.2h1.6M265.8 29.2h1.8M258.6 34h1.6M265.8 34h1.8" stroke="#111" stroke-width="0.7" fill="none"/>
<rect x="273.4" y="28.2" width="7.4" height="6.8" rx="1" fill="#dfe6ee" stroke="#223" stroke-width="0.8"/><path d="M275 31.6h1.6M277.8 31.6h1.6M276.4 30.2v2.8M278 30.2v2.8" stroke="#111" stroke-width="0.7"/>
<rect x="290.2" y="30" width="7.4" height="5.6" fill="#8fbcea" stroke="#5a88b8" stroke-width="0.5"/><path d="M290.4 35.4l2.4-3l1.6 1.6l1.4-1.2l1.6 2.6z" fill="#e8f0fa"/><path d="M294.6 28.6q2.4-1.6 3.8 0.8" stroke="#222" stroke-width="0.6" fill="none"/><path d="M297.6 28.6l1 1.4l0.6-1.8z" fill="#222"/>
<rect x="302" y="25.2" width="14.6" height="13" fill="#fafafa" stroke="#c8c8c8" stroke-width="0.6"/>
<path d="M304.6 35.2l3-2.2h7.4l-3 2.2z" fill="#7fa0f0" stroke="#4060d0" stroke-width="0.4"/>
<path d="M304.6 33l3-2.2h7.4l-3 2.2z" fill="#20c020" stroke="#108010" stroke-width="0.4"/>
<path d="M304.6 30.6l3-2.4h7.4l-3 2.4z" fill="#e82020" stroke="#a01010" stroke-width="0.4"/>
<path d="M319.6 28.6h11M319.6 34.8h11" stroke="#e81010" stroke-width="1"/><path d="M323.8 27.2v9M326.4 27.2v9" stroke="#e81010" stroke-width="0.8"/><path d="M325.1 29.6v4.2" stroke="#111" stroke-width="1.2"/><path d="M322.6 31.7h5" stroke="#e81010" stroke-width="0.7"/>
<rect x="336.6" y="29.6" width="5.4" height="5" rx="0.5" fill="#f2f2f2" stroke="#c2c2c2" stroke-width="0.7"/><path d="M337.8 29.6v-1.4a1.5 1.5 0 0 1 3 0v1.4" fill="none" stroke="#c2c2c2" stroke-width="0.7"/><path d="M338.6 31v2h1.8" stroke="#c4c4c4" stroke-width="0.5" fill="none"/>
<rect x="350.4" y="29.8" width="5.4" height="5" rx="0.5" fill="#f2f2f2" stroke="#c2c2c2" stroke-width="0.7"/><path d="M351.6 34.8v1.2a1.5 1.5 0 0 0 3 0v-1.2" fill="none" stroke="#d2d2d2" stroke-width="0.7"/><path d="M352.4 31.2v2h1.8" stroke="#c4c4c4" stroke-width="0.5" fill="none"/>
<rect x="363.8" y="28.6" width="6.4" height="6.2" fill="#f55252"/><rect x="365" y="29.7" width="1.6" height="4" fill="#fff"/><rect x="367.4" y="29.7" width="1.6" height="4" fill="#fff"/>
<path d="M378.4 31.6h12M379.8 31.6q0.6-3 2.6-3h4q2 0 2.6 3M379.2 31.6v4.4M389.6 31.6v4.4" stroke="#111" stroke-width="0.7" fill="none"/><path d="M380.8 31.4l1.6-2.6l1.6 2.6l1.6-2.6l1.6 2.6l1-1.6" stroke="#111" stroke-width="0.45" fill="none"/><path d="M378.4 32.6h12" stroke="#111" stroke-width="0.5"/>
<path d="M394.4 36v-5h1.2v-1.6h1.2v-1.4h2.4v1.4h1.2v1.6h1.2v5h-1.4v-3.4h-4.4v3.4z" fill="#666" stroke="#444" stroke-width="0.4"/><path d="M394 29.4l1 0.6M402 29.4l-1 0.6M396.6 27.6l0.4 0.8M399.4 27.6l-0.4 0.8" stroke="#444" stroke-width="0.5"/>
<rect x="407.6" y="28.2" width="8.6" height="2.4" fill="#f6f6f6" stroke="#333" stroke-width="0.6"/><rect x="407.6" y="32.8" width="8.6" height="2.4" fill="#fff" stroke="#999" stroke-width="0.6"/>
<path d="M420.6 30.8h2.8l-1.4 1.6z" fill="#111"/>
<path d="M429.6 30.4l5-3l6.4 1.8v4.6l-5 3l-6.4-1.8z" fill="#f6cf1c" stroke="#6a5400" stroke-width="0.6"/><path d="M429.6 30.4l6.4 1.8l5-3M436 32.2v4.6" stroke="#a08400" stroke-width="0.5" fill="none"/><circle cx="431.6" cy="33" r="0.7" fill="#221"/><circle cx="434" cy="33.7" r="0.7" fill="#221"/><circle cx="438.4" cy="32.6" r="0.7" fill="#221"/>
<rect x="447.8" y="27.4" width="5.8" height="6" rx="1.3" fill="#8a8a8a" stroke="#555" stroke-width="0.5"/><circle cx="450.8" cy="30.4" r="1.9" fill="#f0c020"/><path d="M448.6 32.8l-3.4 3.2" stroke="#c89a10" stroke-width="1.4"/><path d="M444.8 35.2l1.4 1.4" stroke="#555" stroke-width="0.6"/>
<path d="M459.8 36.2l3-2.8h10.8l-3 2.8z" fill="#18c018"/>
<text x="466.80" y="33.32" font-size="7.60" fill="#000" font-weight="bold" text-anchor="middle" letter-spacing="-0.5" stroke="#000" stroke-width="0.2">3D</text>
<g clip-path="url(#cv)">
<rect x="55.5" y="51" width="745" height="416" fill="url(#grid)"/>
<path d="M400 112.2H590" stroke="#e8e8e8" stroke-width="2.2" fill="none"/>
<path d="M384 136.5H597" stroke="#e8e8e8" stroke-width="2.2" fill="none"/>
<path d="M398.07 112.2H600" stroke="#fff" stroke-width="2.2" stroke-dasharray="0.9 11.475" fill="none"/>
<path d="M385.70 136.5H597" stroke="#fff" stroke-width="2.2" stroke-dasharray="0.9 11.475" fill="none"/>
<path d="M102.0 209.4L102.7 209.7L103.6 210.1L104.7 210.6L106.0 211.1L107.3 211.7L108.7 212.3L110.2 212.9L111.7 213.5L113.3 214.1L114.8 214.6L116.3 215.1L117.7 215.6L119.1 215.9L120.5 216.3L121.9 216.6L123.3 217.0L124.8 217.3L126.2 217.6L127.7 217.8L129.1 218.1L130.6 218.3L132.0 218.4L133.5 218.6L134.9 218.7L136.4 218.8L137.8 218.9L139.2 218.9L140.6 218.9L142.0 218.9L143.5 218.9L144.9 218.8L146.4 218.7L147.8 218.6L149.3 218.4L150.7 218.2L152.2 217.9L153.7 217.6L155.3 217.2L156.8 216.8L158.4 216.3L159.9 215.8L161.5 215.3L163.0 214.7L164.6 214.1L166.1 213.5L167.6 212.8L169.1 212.2L170.5 211.5L171.9 210.8L173.3 210.0L174.6 209.2L176.0 208.3L177.3 207.5L178.6 206.6L179.8 205.7L181.1 204.8L182.3 203.9L183.4 203.1L184.6 202.2L185.7 201.4L186.7 200.6L187.7 199.8L188.6 199.0L189.5 198.2L190.4 197.5L191.2 196.7L192.0 196.0L192.9 195.2L193.7 194.4L194.6 193.6L195.6 192.7L196.7 191.8L197.8 190.9L199.0 189.9L200.3 188.9L201.6 187.9L202.9 186.8L204.2 185.8L205.6 184.7L207.0 183.6L208.4 182.5L209.8 181.5L211.2 180.4L212.6 179.4L214.1 178.4L215.5 177.4L217.0 176.3L218.5 175.3L220.0 174.3L221.5 173.3L223.1 172.3L224.6 171.3L226.1 170.3L227.6 169.3L229.1 168.4L230.6 167.4L232.1 166.5L233.5 165.5L235.0 164.6L236.4 163.6L237.9 162.7L239.3 161.8L240.7 160.9L242.1 160.0L243.5 159.1L244.9 158.3L246.2 157.4L247.6 156.6L248.9 155.9L250.2 155.1L251.5 154.3L252.7 153.6L254.0 152.9L255.3 152.2L256.5 151.5L257.7 150.9L258.9 150.3L260.1 149.6L261.3 149.1L262.5 148.5L263.6 148.0L264.8 147.4L265.9 146.9L267.0 146.5L268.1 146.0L269.2 145.6L270.3 145.2L271.3 144.8L272.4 144.4L273.5 144.0L274.7 143.7L275.8 143.4L276.9 143.1L278.1 142.8L279.2 142.6L280.4 142.4L281.6 142.2L282.8 142.0L284.0 141.8L285.2 141.7L286.4 141.5L287.7 141.3L288.9 141.1L290.2 140.9L291.5 140.6L292.8 140.4L294.1 140.1L295.4 139.8L296.7 139.6L298.0 139.3L299.3 139.0L300.6 138.7L301.9 138.4L303.2 138.2L304.5 137.9L305.7 137.7L306.9 137.5L308.2 137.2L309.4 137.0L310.6 136.8L311.8 136.6L313.0 136.4L314.2 136.2L315.3 136.0L316.5 135.8L317.7 135.6L318.9 135.5L320.1 135.3L321.4 135.1L322.6 135.0L323.7 134.8L324.9 134.7L326.1 134.6L327.3 134.5L328.5 134.3L329.8 134.2L331.0 134.1L332.3 134.0L333.7 133.8L335.1 133.7L336.6 133.6L338.0 133.4L339.5 133.2L341.1 133.1L342.6 132.9L344.2 132.8L345.8 132.6L347.5 132.5L349.2 132.3L350.9 132.2L352.7 132.1L354.5 132.0L356.5 131.9L358.7 131.9L361.1 131.8L363.5 131.8L366.0 131.8L368.5 131.8L370.9 131.8L373.2 131.8L375.3 131.8L377.2 131.8L378.8 131.8L380.0 131.8M102.8 207.4L103.6 207.7L104.5 208.1L105.6 208.6L106.8 209.1L108.2 209.6L109.6 210.2L111.0 210.8L112.5 211.4L114.0 212.0L115.5 212.5L116.9 213.0L118.3 213.4L119.7 213.8L121.0 214.2L122.4 214.5L123.8 214.8L125.2 215.1L126.6 215.4L128.0 215.7L129.4 215.9L130.9 216.1L132.3 216.3L133.7 216.4L135.1 216.5L136.5 216.6L137.9 216.7L139.3 216.7L140.6 216.7L142.0 216.7L143.4 216.7L144.8 216.6L146.2 216.5L147.6 216.4L149.0 216.2L150.4 216.0L151.8 215.7L153.2 215.4L154.7 215.0L156.2 214.6L157.7 214.2L159.2 213.7L160.8 213.2L162.3 212.6L163.8 212.1L165.3 211.4L166.7 210.8L168.1 210.2L169.5 209.5L170.8 208.8L172.2 208.1L173.5 207.3L174.8 206.5L176.1 205.7L177.3 204.8L178.5 203.9L179.8 203.0L180.9 202.2L182.1 201.3L183.2 200.4L184.3 199.6L185.4 198.8L186.3 198.1L187.2 197.3L188.0 196.6L188.9 195.8L189.7 195.1L190.5 194.3L191.4 193.6L192.3 192.8L193.2 191.9L194.2 191.1L195.3 190.2L196.5 189.2L197.7 188.2L198.9 187.2L200.2 186.2L201.5 185.1L202.9 184.0L204.3 183.0L205.7 181.9L207.1 180.8L208.5 179.7L209.9 178.6L211.4 177.6L212.8 176.6L214.3 175.6L215.8 174.5L217.3 173.5L218.8 172.5L220.3 171.5L221.9 170.5L223.4 169.5L224.9 168.5L226.4 167.5L227.9 166.5L229.4 165.6L230.9 164.6L232.3 163.7L233.8 162.7L235.2 161.8L236.7 160.9L238.1 159.9L239.5 159.0L240.9 158.1L242.3 157.3L243.7 156.4L245.1 155.6L246.4 154.8L247.8 154.0L249.1 153.2L250.4 152.4L251.7 151.7L252.9 151.0L254.2 150.3L255.4 149.6L256.7 148.9L257.9 148.3L259.1 147.7L260.3 147.1L261.5 146.5L262.7 146.0L263.9 145.4L265.0 144.9L266.1 144.4L267.3 144.0L268.4 143.5L269.5 143.1L270.6 142.7L271.7 142.3L272.9 141.9L274.0 141.6L275.2 141.2L276.4 140.9L277.6 140.7L278.8 140.4L280.0 140.2L281.3 140.0L282.5 139.8L283.7 139.7L284.9 139.5L286.1 139.3L287.3 139.1L288.6 138.9L289.8 138.7L291.0 138.5L292.3 138.2L293.6 138.0L294.9 137.7L296.2 137.4L297.5 137.1L298.8 136.8L300.1 136.6L301.4 136.3L302.7 136.0L304.0 135.8L305.3 135.5L306.5 135.3L307.8 135.1L309.0 134.8L310.2 134.6L311.4 134.4L312.6 134.2L313.8 134.0L315.0 133.8L316.2 133.6L317.4 133.5L318.6 133.3L319.9 133.1L321.1 132.9L322.3 132.8L323.5 132.7L324.7 132.5L325.9 132.4L327.1 132.3L328.3 132.1L329.5 132.0L330.8 131.9L332.1 131.8L333.5 131.6L334.9 131.5L336.3 131.4L337.8 131.2L339.3 131.1L340.8 130.9L342.4 130.7L344.0 130.6L345.6 130.4L347.3 130.3L349.0 130.1L350.8 130.0L352.6 129.9L354.5 129.8L356.5 129.7L358.7 129.7L361.0 129.6L363.5 129.6L366.0 129.6L368.5 129.6L370.9 129.6L373.2 129.6L375.3 129.6L377.2 129.6L378.7 129.6L380.0 129.6M98.0 216.0L98.8 216.4L99.8 216.8L101.1 217.3L102.4 217.9L103.9 218.6L105.5 219.3L107.2 220.0L108.9 220.7L110.6 221.4L112.4 222.0L114.1 222.6L115.7 223.1L117.3 223.5L118.9 223.9L120.6 224.3L122.3 224.7L124.0 225.1L125.7 225.4L127.4 225.7L129.2 226.0L130.9 226.2L132.6 226.4L134.3 226.6L135.9 226.7L137.6 226.8L139.2 226.8L140.8 226.8L142.4 226.8L144.0 226.7L145.6 226.6L147.2 226.5L148.8 226.3L150.4 226.1L152.0 225.9L153.6 225.6L155.2 225.3L156.8 224.9L158.5 224.5L160.1 224.0L161.8 223.6L163.4 223.0L165.1 222.5L166.7 221.9L168.3 221.2L169.9 220.6L171.5 219.9L173.0 219.2L174.5 218.5L176.0 217.7L177.4 216.9L178.9 216.1L180.3 215.2L181.7 214.3L183.1 213.4L184.4 212.4L185.7 211.5L187.0 210.6L188.3 209.7L189.5 208.8L190.7 207.9L191.8 207.0L192.9 206.2L193.9 205.4L194.9 204.6L195.8 203.8L196.7 203.0L197.6 202.2L198.6 201.4L199.5 200.6L200.5 199.7L201.6 198.8L202.7 197.8L203.9 196.8L205.1 195.8L206.4 194.7L207.7 193.6L209.0 192.4L210.4 191.3L211.8 190.1L213.2 188.9L214.5 187.8L215.9 186.6L217.3 185.5L218.7 184.4L220.1 183.2L221.5 182.1L222.9 181.0L224.4 179.9L225.9 178.7L227.3 177.6L228.8 176.5L230.2 175.4L231.6 174.4L233.0 173.3L234.4 172.3L235.7 171.4L236.9 170.5L238.1 169.6L239.2 168.7L240.3 167.9L241.4 167.1L242.4 166.3L243.5 165.6L244.5 164.8L245.6 164.1L246.7 163.4L247.9 162.7L249.1 161.9L250.3 161.2L251.7 160.5L253.0 159.7L254.5 159.0L255.9 158.3L257.3 157.5L258.8 156.8L260.2 156.2L261.6 155.5L262.9 154.9L264.2 154.3L265.4 153.8L266.6 153.3L267.6 152.9L268.7 152.5L269.7 152.2L270.6 151.9L271.5 151.6L272.5 151.3L273.4 151.1L274.3 150.8L275.3 150.6L276.2 150.3L277.3 150.1L278.3 149.8L279.3 149.6L280.2 149.4L281.2 149.2L282.2 149.0L283.2 148.8L284.2 148.7L285.3 148.5L286.4 148.3L287.6 148.1L288.8 147.9L290.2 147.7L291.6 147.4L293.1 147.2L294.6 146.9L296.1 146.7L297.8 146.4L299.4 146.1L301.1 145.8L302.9 145.6L304.7 145.3L306.5 145.0L308.3 144.8L310.1 144.5L312.0 144.2L314.0 144.0L316.0 143.7L318.1 143.5L320.2 143.3L322.3 143.0L324.4 142.8L326.6 142.5L328.7 142.3L330.9 142.0L333.0 141.8L335.1 141.5L337.3 141.2L339.4 140.9L341.6 140.6L343.8 140.2L346.1 139.9L348.3 139.6L350.4 139.3L352.6 138.9L354.7 138.7L356.7 138.4L358.7 138.2L360.6 138.0L362.5 137.9L364.4 137.7L366.3 137.7L368.2 137.6L370.1 137.6L371.8 137.6L373.6 137.6L375.2 137.6L376.6 137.6L377.9 137.6L379.1 137.6L380.0 137.6M98.8 214.0L99.7 214.3L100.7 214.8L101.9 215.3L103.3 215.9L104.8 216.6L106.4 217.3L108.0 218.0L109.7 218.6L111.4 219.3L113.1 219.9L114.7 220.5L116.3 220.9L117.9 221.4L119.5 221.8L121.1 222.2L122.8 222.6L124.4 222.9L126.1 223.2L127.8 223.5L129.5 223.8L131.2 224.0L132.8 224.2L134.5 224.4L136.1 224.5L137.7 224.6L139.2 224.6L140.8 224.6L142.4 224.6L143.9 224.5L145.5 224.4L147.0 224.3L148.6 224.2L150.1 224.0L151.7 223.7L153.2 223.4L154.8 223.1L156.3 222.8L157.9 222.4L159.5 221.9L161.1 221.4L162.7 220.9L164.3 220.4L165.9 219.8L167.5 219.2L169.0 218.6L170.6 217.9L172.1 217.2L173.5 216.5L174.9 215.8L176.3 215.0L177.7 214.2L179.1 213.3L180.5 212.5L181.8 211.5L183.1 210.6L184.4 209.7L185.7 208.8L186.9 207.9L188.2 207.0L189.3 206.1L190.5 205.3L191.5 204.5L192.5 203.7L193.4 202.9L194.4 202.1L195.3 201.4L196.2 200.6L197.1 199.7L198.1 198.9L199.1 198.0L200.2 197.1L201.3 196.2L202.5 195.2L203.7 194.1L205.0 193.0L206.3 191.9L207.6 190.8L209.0 189.6L210.3 188.4L211.7 187.3L213.1 186.1L214.5 184.9L215.9 183.8L217.3 182.6L218.7 181.5L220.1 180.4L221.6 179.3L223.0 178.1L224.5 177.0L226.0 175.9L227.5 174.8L228.9 173.7L230.3 172.6L231.7 171.6L233.0 170.6L234.3 169.6L235.6 168.7L236.8 167.8L237.9 167.0L239.0 166.1L240.1 165.3L241.1 164.6L242.2 163.8L243.3 163.0L244.4 162.3L245.5 161.5L246.7 160.8L247.9 160.1L249.2 159.3L250.6 158.5L252.0 157.8L253.4 157.0L254.9 156.3L256.4 155.6L257.8 154.8L259.3 154.2L260.7 153.5L262.0 152.9L263.3 152.3L264.6 151.8L265.7 151.3L266.9 150.9L267.9 150.5L268.9 150.1L269.9 149.8L270.9 149.5L271.9 149.2L272.8 148.9L273.8 148.7L274.7 148.4L275.7 148.2L276.7 147.9L277.8 147.7L278.8 147.5L279.8 147.2L280.8 147.0L281.8 146.9L282.8 146.7L283.9 146.5L284.9 146.3L286.1 146.1L287.2 145.9L288.5 145.7L289.8 145.5L291.2 145.3L292.7 145.0L294.2 144.8L295.8 144.5L297.4 144.2L299.1 144.0L300.8 143.7L302.5 143.4L304.3 143.1L306.1 142.8L308.0 142.6L309.9 142.3L311.8 142.1L313.7 141.8L315.8 141.6L317.8 141.3L319.9 141.1L322.0 140.8L324.2 140.6L326.3 140.3L328.5 140.1L330.6 139.8L332.7 139.6L334.9 139.3L337.0 139.0L339.1 138.7L341.3 138.4L343.5 138.1L345.7 137.7L347.9 137.4L350.1 137.1L352.3 136.8L354.4 136.5L356.5 136.2L358.5 136.0L360.4 135.8L362.3 135.7L364.3 135.6L366.2 135.5L368.1 135.4L370.0 135.4L371.8 135.4L373.6 135.4L375.2 135.4L376.6 135.4L378.0 135.4L379.1 135.4L380.0 135.4M262.6 148.4L263.2 148.1L263.9 147.6L264.7 147.1L265.6 146.5L266.5 145.9L267.6 145.2L268.7 144.5L269.8 143.8L271.0 143.1L272.2 142.4L273.3 141.8L274.5 141.2L275.7 140.6L276.9 140.0L278.2 139.5L279.5 138.9L280.9 138.3L282.2 137.8L283.6 137.2L285.0 136.7L286.4 136.2L287.7 135.6L289.1 135.1L290.4 134.6L291.7 134.1L292.9 133.7L294.2 133.2L295.4 132.8L296.7 132.3L297.9 131.9L299.2 131.5L300.4 131.1L301.6 130.6L302.9 130.2L304.1 129.8L305.3 129.4L306.6 129.1L307.8 128.7L309.1 128.3L310.3 127.9L311.6 127.6L312.8 127.2L314.0 126.9L315.3 126.5L316.5 126.2L317.8 125.9L319.0 125.6L320.3 125.3L321.5 125.0L322.7 124.7L324.0 124.4L325.2 124.2L326.5 123.9L327.7 123.6L329.0 123.4L330.2 123.2L331.4 122.9L332.7 122.7L333.9 122.5L335.2 122.3L336.4 122.1L337.7 121.9L338.9 121.7L340.2 121.5L341.4 121.3L342.6 121.1L343.9 121.0L345.1 120.8L346.4 120.7L347.6 120.5L348.9 120.4L350.1 120.3L351.3 120.2L352.5 120.1L353.7 120.0L354.9 119.9L356.1 119.9L357.2 119.8L358.4 119.8L359.7 119.7L360.9 119.7L362.2 119.7L363.6 119.6L365.0 119.6L366.6 119.6L368.3 119.5L370.1 119.5L372.0 119.5L374.0 119.5L375.9 119.5L377.8 119.5L379.6 119.5L381.3 119.5L382.8 119.5L384.0 119.5L385.0 119.5M261.4 146.6L262.0 146.2L262.7 145.8L263.5 145.3L264.4 144.7L265.3 144.0L266.4 143.3L267.5 142.6L268.7 141.9L269.9 141.2L271.1 140.5L272.3 139.8L273.5 139.2L274.7 138.6L276.0 138.0L277.3 137.5L278.6 136.9L280.0 136.3L281.4 135.7L282.8 135.2L284.2 134.6L285.6 134.1L287.0 133.6L288.3 133.1L289.6 132.6L290.9 132.1L292.2 131.6L293.4 131.1L294.7 130.7L296.0 130.2L297.2 129.8L298.4 129.4L299.7 129.0L300.9 128.6L302.2 128.1L303.4 127.7L304.7 127.4L305.9 127.0L307.2 126.6L308.4 126.2L309.7 125.8L310.9 125.5L312.2 125.1L313.5 124.8L314.7 124.4L316.0 124.1L317.2 123.8L318.5 123.4L319.7 123.1L321.0 122.8L322.3 122.5L323.5 122.3L324.8 122.0L326.0 121.7L327.3 121.5L328.5 121.2L329.8 121.0L331.1 120.8L332.3 120.5L333.6 120.3L334.8 120.1L336.1 119.9L337.3 119.7L338.6 119.5L339.8 119.3L341.1 119.1L342.4 119.0L343.6 118.8L344.9 118.6L346.1 118.5L347.4 118.4L348.6 118.2L349.9 118.1L351.1 118.0L352.4 117.9L353.6 117.8L354.8 117.7L355.9 117.7L357.1 117.6L358.4 117.6L359.6 117.5L360.9 117.5L362.2 117.5L363.5 117.4L365.0 117.4L366.5 117.4L368.3 117.3L370.1 117.3L372.0 117.3L374.0 117.3L375.9 117.3L377.8 117.3L379.6 117.3L381.3 117.3L382.8 117.3L384.0 117.3L385.0 117.3M200.8 159.9L201.5 159.5L202.4 159.0L203.5 158.3L204.7 157.6L206.0 156.8L207.4 156.0L208.8 155.1L210.2 154.3L211.6 153.4L213.0 152.6L214.3 151.9L215.6 151.2L216.7 150.5L217.7 149.9L218.7 149.3L219.7 148.8L220.6 148.2L221.6 147.7L222.6 147.1L223.6 146.6L224.7 146.0L225.8 145.4L227.1 144.7L228.5 144.0L230.0 143.2L231.6 142.4L233.3 141.5L235.1 140.6L236.9 139.6L238.7 138.7L240.7 137.7L242.6 136.8L244.5 135.8L246.5 134.9L248.5 134.0L250.4 133.2L252.4 132.4L254.4 131.6L256.5 130.8L258.7 130.1L260.8 129.3L263.0 128.6L265.1 127.8L267.3 127.2L269.4 126.5L271.4 125.8L273.4 125.2L275.3 124.7L277.1 124.1L278.9 123.6L280.7 123.2L282.4 122.7L284.1 122.3L285.7 122.0L287.3 121.6L288.9 121.2L290.5 120.9L292.1 120.6L293.7 120.2L295.2 119.9L296.8 119.5L298.3 119.2L299.7 118.9L301.2 118.7L302.6 118.4L304.0 118.1L305.4 117.8L306.8 117.6L308.3 117.3L309.7 117.0L311.2 116.6L312.8 116.3L314.3 115.9L316.0 115.5L317.7 115.0L319.4 114.6L321.1 114.1L322.8 113.7L324.5 113.2L326.2 112.7L327.8 112.3L329.4 111.8L330.9 111.4L332.3 111.1L333.6 110.7L334.9 110.3L336.2 110.0L337.4 109.7L338.6 109.3L339.7 109.0L340.8 108.7L341.8 108.5L342.8 108.2L343.8 108.0L344.8 107.8L345.7 107.6L346.6 107.4L347.3 107.3L348.0 107.2L348.7 107.1L349.2 107.0L349.8 107.0L350.4 106.9L351.1 106.9L351.8 106.9L352.6 106.9L353.5 106.8L354.5 106.8L355.7 106.8L357.1 106.7L358.7 106.7L360.4 106.7L362.1 106.7L363.8 106.7L365.5 106.7L367.1 106.7L368.7 106.7L370.0 106.7L371.1 106.7L372.0 106.7M199.6 158.1L200.4 157.6L201.3 157.1L202.3 156.4L203.5 155.7L204.8 154.9L206.2 154.1L207.6 153.3L209.1 152.4L210.5 151.5L211.9 150.7L213.2 150.0L214.4 149.2L215.6 148.6L216.6 148.0L217.6 147.4L218.6 146.9L219.5 146.3L220.5 145.8L221.5 145.2L222.5 144.6L223.6 144.0L224.8 143.4L226.1 142.7L227.5 142.0L229.0 141.2L230.6 140.4L232.3 139.5L234.0 138.6L235.9 137.7L237.8 136.7L239.7 135.7L241.6 134.8L243.6 133.8L245.6 132.9L247.6 132.0L249.6 131.2L251.6 130.4L253.7 129.6L255.8 128.8L257.9 128.0L260.1 127.2L262.3 126.5L264.4 125.8L266.6 125.1L268.7 124.4L270.8 123.7L272.8 123.1L274.7 122.5L276.6 122.0L278.4 121.5L280.1 121.0L281.9 120.6L283.6 120.2L285.2 119.8L286.9 119.4L288.5 119.1L290.1 118.8L291.6 118.4L293.2 118.1L294.8 117.7L296.3 117.4L297.8 117.1L299.3 116.8L300.7 116.5L302.2 116.2L303.6 115.9L305.0 115.7L306.4 115.4L307.8 115.1L309.3 114.8L310.7 114.5L312.2 114.1L313.8 113.7L315.4 113.3L317.1 112.9L318.8 112.5L320.5 112.0L322.2 111.5L323.9 111.1L325.6 110.6L327.2 110.2L328.8 109.7L330.3 109.3L331.7 108.9L333.1 108.6L334.4 108.2L335.6 107.9L336.8 107.5L338.0 107.2L339.1 106.9L340.2 106.6L341.3 106.3L342.3 106.1L343.3 105.8L344.3 105.6L345.3 105.4L346.2 105.3L347.0 105.1L347.7 105.0L348.4 104.9L349.0 104.8L349.7 104.8L350.3 104.7L351.0 104.7L351.7 104.7L352.5 104.7L353.4 104.6L354.5 104.6L355.7 104.6L357.1 104.5L358.7 104.5L360.3 104.5L362.1 104.5L363.8 104.5L365.5 104.5L367.1 104.5L368.7 104.5L370.0 104.5L371.1 104.5L372.0 104.5M203.0 164.9L203.6 164.6L204.3 164.1L205.2 163.5L206.2 162.9L207.2 162.3L208.3 161.5L209.5 160.8L210.7 160.1L212.0 159.3L213.2 158.6L214.4 157.8L215.6 157.2L216.7 156.5L217.8 155.8L219.0 155.2L220.2 154.6L221.4 153.9L222.6 153.3L223.8 152.6L225.1 151.9L226.4 151.2L227.7 150.5L229.1 149.7L230.5 149.0L232.0 148.1L233.5 147.3L235.1 146.4L236.7 145.4L238.3 144.5L239.9 143.5L241.6 142.6L243.3 141.6L245.0 140.7L246.8 139.8L248.6 139.0L250.4 138.2L252.3 137.5L254.3 136.7L256.4 136.0L258.5 135.3L260.6 134.6L262.8 134.0L265.0 133.4L267.2 132.7L269.3 132.1L271.4 131.6L273.4 131.0L275.3 130.5L277.1 129.9L278.9 129.5L280.7 129.0L282.4 128.6L284.1 128.1L285.8 127.7L287.4 127.4L289.0 127.0L290.6 126.6L292.2 126.2L293.7 125.8L295.3 125.5L296.8 125.1L298.2 124.7L299.6 124.4L300.9 124.0L302.3 123.7L303.6 123.4L304.9 123.0L306.3 122.7L307.7 122.4L309.1 122.0L310.6 121.6L312.2 121.3L314.0 120.9L315.8 120.5L317.7 120.0L319.6 119.6L321.6 119.1L323.6 118.7L325.6 118.2L327.6 117.8L329.6 117.4L331.5 117.0L333.4 116.6L335.2 116.3L336.9 116.0L338.6 115.7L340.3 115.5L341.9 115.2L343.5 115.0L345.1 114.8L346.7 114.6L348.2 114.5L349.8 114.3L351.4 114.2L353.0 114.0L354.6 113.9L356.2 113.8L357.8 113.7L359.4 113.6L361.0 113.6L362.6 113.5L364.2 113.5L365.8 113.5L367.4 113.5L369.0 113.5L370.7 113.4L372.3 113.4L374.0 113.4L375.8 113.4L377.7 113.4L379.6 113.3L381.7 113.3L383.7 113.3L385.7 113.3L387.7 113.3L389.5 113.3L391.2 113.3L392.7 113.3L394.0 113.3L395.0 113.3M201.8 163.1L202.4 162.7L203.2 162.2L204.0 161.7L205.0 161.1L206.0 160.4L207.2 159.7L208.4 158.9L209.6 158.2L210.8 157.4L212.0 156.7L213.3 155.9L214.4 155.2L215.6 154.6L216.8 153.9L217.9 153.3L219.1 152.6L220.3 152.0L221.5 151.3L222.8 150.7L224.0 150.0L225.3 149.3L226.7 148.6L228.0 147.8L229.5 147.0L230.9 146.2L232.4 145.4L234.0 144.5L235.6 143.5L237.2 142.6L238.8 141.6L240.5 140.7L242.3 139.7L244.0 138.8L245.8 137.9L247.7 137.0L249.6 136.2L251.5 135.4L253.6 134.7L255.7 133.9L257.8 133.2L260.0 132.5L262.2 131.9L264.4 131.2L266.6 130.6L268.7 130.0L270.8 129.4L272.8 128.9L274.7 128.3L276.6 127.8L278.4 127.3L280.1 126.9L281.9 126.4L283.6 126.0L285.2 125.6L286.9 125.2L288.5 124.8L290.1 124.5L291.6 124.1L293.2 123.7L294.7 123.3L296.2 123.0L297.7 122.6L299.0 122.2L300.4 121.9L301.7 121.6L303.0 121.2L304.4 120.9L305.7 120.6L307.1 120.2L308.6 119.9L310.1 119.5L311.8 119.1L313.5 118.7L315.3 118.3L317.2 117.9L319.1 117.4L321.1 117.0L323.1 116.5L325.1 116.1L327.1 115.6L329.1 115.2L331.1 114.8L333.0 114.4L334.8 114.1L336.6 113.8L338.3 113.5L340.0 113.3L341.6 113.0L343.2 112.8L344.8 112.6L346.4 112.4L348.0 112.3L349.6 112.1L351.2 112.0L352.8 111.8L354.4 111.7L356.1 111.6L357.7 111.5L359.3 111.4L360.9 111.4L362.5 111.3L364.1 111.3L365.8 111.3L367.4 111.3L369.0 111.3L370.7 111.2L372.3 111.2L374.0 111.2L375.8 111.2L377.6 111.2L379.6 111.1L381.7 111.1L383.7 111.1L385.7 111.1L387.7 111.1L389.5 111.1L391.2 111.1L392.7 111.1L394.0 111.1L395.0 111.1M217.0 163.9L217.7 163.4L218.7 162.8L219.7 162.1L221.0 161.4L222.3 160.5L223.7 159.6L225.1 158.6L226.6 157.7L228.2 156.7L229.7 155.7L231.1 154.8L232.6 153.9L234.0 153.1L235.5 152.2L237.0 151.2L238.5 150.3L240.1 149.3L241.6 148.4L243.2 147.5L244.7 146.6L246.2 145.7L247.7 144.9L249.1 144.1L250.5 143.4L251.8 142.7L253.2 142.1L254.5 141.5L255.8 140.9L257.1 140.4L258.4 139.9L259.7 139.4L260.9 138.9L262.1 138.5L263.2 138.1L264.3 137.6L265.4 137.2L266.4 136.8L267.3 136.5L268.2 136.2L269.0 135.9L269.8 135.6L270.6 135.4L271.4 135.1L272.1 134.9L272.9 134.6L273.7 134.3L274.6 134.0L275.4 133.6L276.4 133.2L277.4 132.8L278.4 132.3L279.5 131.8L280.5 131.3L281.6 130.8L282.6 130.3L283.6 129.8L284.5 129.4L285.3 129.0L285.9 128.6L286.5 128.4M215.8 162.1L216.5 161.6L217.5 161.0L218.5 160.3L219.8 159.5L221.1 158.7L222.5 157.7L223.9 156.8L225.5 155.8L227.0 154.8L228.5 153.9L230.0 153.0L231.4 152.1L232.8 151.2L234.3 150.3L235.8 149.4L237.4 148.4L238.9 147.5L240.5 146.5L242.0 145.6L243.6 144.7L245.1 143.8L246.6 143.0L248.1 142.2L249.5 141.4L250.9 140.7L252.3 140.1L253.6 139.5L255.0 138.9L256.3 138.4L257.6 137.8L258.9 137.3L260.1 136.9L261.3 136.4L262.4 136.0L263.5 135.6L264.6 135.2L265.6 134.8L266.6 134.4L267.5 134.1L268.3 133.8L269.1 133.6L269.9 133.3L270.7 133.0L271.4 132.8L272.2 132.5L272.9 132.2L273.7 131.9L274.6 131.6L275.5 131.2L276.4 130.8L277.5 130.3L278.5 129.8L279.6 129.3L280.6 128.8L281.7 128.3L282.6 127.8L283.5 127.4L284.3 127.0L285.0 126.7L285.5 126.4M300.4 124.4L301.2 124.1L302.3 123.7L303.6 123.3L305.0 122.8L306.6 122.2L308.2 121.6L310.0 121.0L311.7 120.4L313.4 119.8L315.2 119.2L316.8 118.6L318.4 118.0L319.9 117.5L321.6 116.9L323.3 116.3L325.0 115.7L326.8 115.0L328.5 114.4L330.1 113.8L331.7 113.3L333.1 112.8L334.4 112.3L335.5 111.9L336.4 111.6M299.6 122.4L300.5 122.1L301.6 121.7L302.9 121.2L304.3 120.7L305.9 120.2L307.5 119.6L309.2 119.0L311.0 118.3L312.7 117.7L314.4 117.1L316.1 116.5L317.6 116.0L319.2 115.4L320.8 114.8L322.6 114.2L324.3 113.6L326.0 113.0L327.8 112.4L329.4 111.8L331.0 111.2L332.4 110.7L333.7 110.3L334.8 109.9L335.6 109.6M290.4 140.8L291.0 140.6L291.7 140.3L292.5 140.0L293.4 139.7L294.4 139.3L295.5 138.9L296.6 138.5L297.8 138.0L299.0 137.6L300.1 137.1L301.3 136.7L302.4 136.2L303.5 135.8L304.7 135.3L305.8 134.8L307.0 134.3L308.2 133.8L309.4 133.2L310.6 132.7L311.8 132.2L313.0 131.7L314.2 131.2L315.3 130.7L316.4 130.2L317.5 129.7L318.6 129.3L319.6 128.8L320.7 128.3L321.7 127.9L322.7 127.4L323.7 127.0L324.7 126.6L325.6 126.2L326.6 125.8L327.5 125.4L328.4 125.0L329.3 124.7L330.3 124.4L331.2 124.0L332.2 123.7L333.1 123.4L334.1 123.1L335.0 122.9L335.8 122.6L336.6 122.4L337.2 122.2L337.8 122.0L338.3 121.9M289.6 138.8L290.2 138.6L290.9 138.3L291.7 138.0L292.7 137.6L293.7 137.3L294.7 136.8L295.9 136.4L297.0 136.0L298.2 135.5L299.3 135.1L300.5 134.6L301.6 134.2L302.7 133.7L303.8 133.3L305.0 132.8L306.2 132.3L307.4 131.7L308.6 131.2L309.8 130.7L311.0 130.2L312.2 129.7L313.3 129.2L314.5 128.7L315.6 128.2L316.6 127.7L317.7 127.3L318.7 126.8L319.8 126.3L320.8 125.9L321.8 125.4L322.8 125.0L323.8 124.5L324.8 124.1L325.7 123.7L326.7 123.3L327.6 123.0L328.6 122.6L329.5 122.3L330.5 121.9L331.5 121.6L332.5 121.3L333.4 121.0L334.3 120.8L335.2 120.5L335.9 120.3L336.6 120.1L337.2 119.9L337.7 119.7M352.2 114.1L353.2 113.9L354.4 113.7L355.8 113.4L357.4 113.1L359.1 112.7L361.0 112.4L362.9 112.0L364.8 111.7L366.7 111.3L368.6 110.9L370.5 110.6L372.2 110.3L373.9 110.0L375.8 109.7L377.7 109.3L379.6 109.0L381.5 108.7L383.4 108.3L385.3 108.0L387.0 107.8L388.6 107.5L390.0 107.3L391.2 107.0L392.2 106.9M351.8 111.9L352.8 111.7L354.0 111.5L355.4 111.2L357.0 110.9L358.7 110.6L360.5 110.2L362.4 109.9L364.4 109.5L366.3 109.1L368.2 108.8L370.1 108.4L371.8 108.1L373.5 107.8L375.4 107.5L377.3 107.2L379.2 106.8L381.2 106.5L383.1 106.2L384.9 105.9L386.6 105.6L388.2 105.3L389.6 105.1L390.9 104.9L391.8 104.7M372.0 106.7L535.0 106.7M372.0 104.5L535.0 104.5M395.0 113.3L560.0 113.3M395.0 111.1L560.0 111.1M560.0 113.3L560.4 113.3L561.0 113.3L561.6 113.3L562.2 113.3L562.9 113.3L563.7 113.3L564.6 113.3L565.6 113.3L566.6 113.3L567.6 113.3L568.8 113.3L570.0 113.3L571.3 113.3L572.8 113.3L574.4 113.3L576.0 113.3L577.8 113.3L579.5 113.2L581.3 113.2L583.2 113.2L585.0 113.2L586.7 113.2L588.4 113.1L590.0 113.1L591.6 113.1L593.1 113.0L594.6 113.0L596.1 113.0L597.6 112.9L599.1 112.9L600.5 112.8L602.0 112.8L603.4 112.7L604.8 112.6L606.2 112.5L607.6 112.4L609.0 112.3L610.3 112.1L611.6 112.0L612.9 111.8L614.2 111.6L615.4 111.4L616.7 111.2L618.0 111.0L619.2 110.9L620.5 110.7L621.8 110.5L623.1 110.3L624.5 110.1L625.9 109.9L627.3 109.8L628.6 109.6L630.0 109.4L631.5 109.2L632.9 109.0L634.3 108.8L635.7 108.7L637.2 108.5L638.7 108.3L640.1 108.1L641.6 107.9L643.2 107.7L644.7 107.5L646.3 107.3L647.8 107.1L649.4 106.9L651.0 106.7L652.6 106.5L654.1 106.3L655.7 106.1L657.2 105.9L658.7 105.7L660.1 105.5L661.5 105.3L663.0 105.1L664.4 104.9L665.8 104.7L667.1 104.4L668.5 104.2L669.8 104.0L671.2 103.8L672.5 103.6L673.8 103.5L675.1 103.3L676.5 103.1L677.8 103.0L679.1 102.8L680.4 102.6L681.6 102.5L682.9 102.3L684.2 102.2L685.4 102.0L686.6 101.9L687.8 101.8L689.0 101.7L690.1 101.6L691.2 101.5L692.4 101.5L693.5 101.4L694.7 101.4L695.9 101.3L697.0 101.3L698.0 101.3L699.0 101.3L699.9 101.2L700.7 101.2L701.5 101.2L702.0 101.2M560.0 111.1L560.5 111.1L561.0 111.1L561.6 111.1L562.2 111.1L563.0 111.1L563.8 111.1L564.6 111.1L565.6 111.1L566.6 111.1L567.6 111.1L568.8 111.1L570.0 111.1L571.3 111.1L572.8 111.1L574.3 111.1L576.0 111.1L577.7 111.1L579.5 111.0L581.3 111.0L583.1 111.0L584.9 111.0L586.7 111.0L588.4 110.9L590.0 110.9L591.5 110.9L593.1 110.8L594.6 110.8L596.1 110.8L597.5 110.7L599.0 110.7L600.4 110.6L601.9 110.6L603.3 110.5L604.7 110.4L606.0 110.3L607.4 110.2L608.7 110.1L610.1 109.9L611.3 109.8L612.6 109.6L613.9 109.4L615.1 109.3L616.4 109.1L617.6 108.9L618.9 108.7L620.2 108.5L621.5 108.3L622.9 108.1L624.2 107.9L625.6 107.8L627.0 107.6L628.4 107.4L629.8 107.2L631.2 107.0L632.6 106.8L634.0 106.7L635.5 106.5L636.9 106.3L638.4 106.1L639.9 105.9L641.4 105.7L642.9 105.5L644.4 105.3L646.0 105.1L647.6 104.9L649.1 104.7L650.7 104.5L652.3 104.3L653.8 104.1L655.4 103.9L656.9 103.7L658.3 103.5L659.8 103.3L661.2 103.1L662.6 102.9L664.0 102.7L665.4 102.5L666.8 102.3L668.2 102.1L669.5 101.9L670.9 101.7L672.2 101.5L673.5 101.3L674.9 101.1L676.2 100.9L677.5 100.8L678.8 100.6L680.1 100.4L681.4 100.3L682.7 100.1L683.9 100.0L685.2 99.9L686.4 99.7L687.6 99.6L688.8 99.5L689.9 99.4L691.1 99.3L692.3 99.3L693.4 99.2L694.6 99.2L695.8 99.1L696.9 99.1L698.0 99.1L699.0 99.1L699.9 99.0L700.7 99.0L701.4 99.0L702.0 99.0M385.0 119.5L560.0 119.5M385.0 117.3L560.0 117.3M560.0 119.5L560.4 119.5L561.0 119.5L561.6 119.5L562.2 119.5L562.9 119.5L563.7 119.5L564.6 119.5L565.6 119.5L566.6 119.5L567.6 119.5L568.8 119.5L570.0 119.5L571.3 119.5L572.8 119.5L574.4 119.5L576.0 119.4L577.8 119.4L579.5 119.4L581.4 119.4L583.2 119.3L585.0 119.3L586.7 119.3L588.4 119.2L590.0 119.2L591.6 119.2L593.1 119.1L594.6 119.1L596.1 119.0L597.6 118.9L599.1 118.9L600.5 118.8L602.0 118.8L603.4 118.7L604.8 118.6L606.2 118.5L607.6 118.4L608.9 118.3L610.3 118.2L611.6 118.1L612.9 118.0L614.1 117.8L615.4 117.7L616.7 117.6L617.9 117.4L619.2 117.3L620.5 117.1L621.8 116.9L623.2 116.7L624.6 116.5L625.9 116.2L627.3 115.9L628.7 115.6L630.1 115.4L631.5 115.0L633.0 114.7L634.4 114.4L635.9 114.1L637.3 113.7L638.8 113.4L640.2 113.1L641.7 112.7L643.3 112.4L644.8 112.0L646.4 111.6L648.0 111.3L649.5 110.9L651.1 110.5L652.7 110.1L654.2 109.7L655.8 109.4L657.3 109.0L658.8 108.7L660.2 108.3L661.6 108.0L663.1 107.7L664.5 107.3L665.8 107.0L667.2 106.7L668.6 106.3L669.9 106.0L671.3 105.7L672.6 105.4L673.9 105.2L675.2 104.9L676.5 104.6L677.8 104.3L679.1 104.1L680.4 103.8L681.7 103.6L683.0 103.4L684.2 103.1L685.5 102.9L686.7 102.7L687.9 102.5L689.0 102.3L690.1 102.2L691.3 102.1L692.4 101.9L693.6 101.8L694.7 101.7L695.9 101.6L697.0 101.6L698.1 101.5L699.1 101.5L700.0 101.4L700.8 101.4L701.5 101.3L702.1 101.3M560.0 117.3L560.5 117.3L561.0 117.3L561.6 117.3L562.2 117.3L563.0 117.3L563.8 117.3L564.6 117.3L565.6 117.3L566.6 117.3L567.6 117.3L568.8 117.3L570.0 117.3L571.3 117.3L572.8 117.3L574.3 117.3L576.0 117.2L577.7 117.2L579.5 117.2L581.3 117.2L583.1 117.1L584.9 117.1L586.7 117.1L588.4 117.0L590.0 117.0L591.5 117.0L593.0 116.9L594.6 116.9L596.1 116.8L597.5 116.7L599.0 116.7L600.4 116.6L601.9 116.6L603.3 116.5L604.7 116.4L606.0 116.3L607.4 116.2L608.8 116.1L610.1 116.0L611.4 115.9L612.7 115.8L613.9 115.7L615.2 115.5L616.4 115.4L617.7 115.2L618.9 115.1L620.2 114.9L621.5 114.7L622.8 114.5L624.2 114.3L625.5 114.0L626.9 113.8L628.3 113.5L629.7 113.2L631.1 112.9L632.5 112.6L633.9 112.3L635.4 111.9L636.8 111.6L638.3 111.3L639.8 110.9L641.2 110.6L642.8 110.2L644.3 109.9L645.9 109.5L647.4 109.1L649.0 108.7L650.6 108.4L652.2 108.0L653.7 107.6L655.3 107.2L656.8 106.9L658.2 106.5L659.7 106.2L661.1 105.8L662.5 105.5L663.9 105.2L665.3 104.8L666.7 104.5L668.1 104.2L669.4 103.9L670.8 103.6L672.1 103.3L673.5 103.0L674.8 102.7L676.1 102.5L677.4 102.2L678.7 101.9L680.0 101.7L681.3 101.4L682.6 101.2L683.8 101.0L685.1 100.7L686.3 100.5L687.5 100.3L688.7 100.2L689.9 100.0L691.0 99.9L692.2 99.7L693.4 99.6L694.6 99.5L695.7 99.5L696.9 99.4L697.9 99.3L698.9 99.3L699.9 99.2L700.7 99.2L701.4 99.1L701.9 99.1M380.0 131.8L560.0 131.8M380.0 129.6L560.0 129.6M560.0 131.8L560.4 131.8L560.8 131.8L561.3 131.8L561.8 131.8L562.4 131.8L563.1 131.8L563.9 131.8L564.8 131.9L565.9 131.8L567.1 131.8L568.4 131.8L570.0 131.8L571.8 131.8L574.0 131.8L576.3 131.7L578.9 131.7L581.6 131.7L584.4 131.7L587.3 131.6L590.1 131.6L592.8 131.5L595.4 131.4L597.9 131.3L600.1 131.1L602.1 130.9L604.0 130.7L605.8 130.4L607.5 130.1L609.2 129.8L610.7 129.5L612.3 129.2L613.7 128.9L615.2 128.5L616.7 128.2L618.2 127.8L619.7 127.5L621.3 127.1L622.8 126.8L624.3 126.4L625.8 126.1L627.3 125.7L628.8 125.4L630.2 125.0L631.7 124.6L633.2 124.2L634.7 123.8L636.3 123.3L637.8 122.9L639.4 122.4L641.0 121.8L642.7 121.3L644.3 120.8L646.0 120.2L647.6 119.6L649.3 119.0L650.9 118.4L652.6 117.8L654.2 117.2L655.8 116.6L657.4 116.0L659.0 115.4L660.5 114.8L662.1 114.2L663.6 113.5L665.2 112.8L666.7 112.2L668.2 111.6L669.7 110.9L671.2 110.3L672.6 109.7L674.0 109.2L675.4 108.6L676.7 108.1L678.1 107.6L679.4 107.2L680.7 106.7L682.0 106.2L683.2 105.8L684.5 105.4L685.7 105.0L686.9 104.7L688.0 104.3L689.2 104.0L690.3 103.7L691.4 103.4L692.6 103.1L693.7 102.9L694.9 102.6L696.0 102.4L697.1 102.2L698.2 102.0L699.2 101.9L700.1 101.7L700.9 101.6L701.6 101.5L702.2 101.4M560.0 129.6L560.4 129.6L560.9 129.6L561.3 129.6L561.9 129.6L562.5 129.6L563.1 129.6L563.9 129.6L564.8 129.7L565.9 129.6L567.0 129.6L568.4 129.6L570.0 129.6L571.8 129.6L574.0 129.6L576.3 129.5L578.9 129.5L581.6 129.5L584.4 129.5L587.2 129.4L590.0 129.4L592.7 129.3L595.3 129.2L597.7 129.1L599.9 128.9L601.9 128.7L603.7 128.5L605.5 128.2L607.1 128.0L608.7 127.7L610.3 127.4L611.8 127.0L613.3 126.7L614.7 126.4L616.2 126.0L617.7 125.7L619.3 125.3L620.8 125.0L622.3 124.6L623.8 124.3L625.3 124.0L626.8 123.6L628.2 123.2L629.7 122.9L631.2 122.5L632.6 122.1L634.1 121.6L635.6 121.2L637.2 120.7L638.7 120.3L640.3 119.8L642.0 119.2L643.6 118.7L645.2 118.1L646.9 117.5L648.5 117.0L650.2 116.4L651.8 115.8L653.4 115.2L655.0 114.6L656.6 114.0L658.2 113.4L659.7 112.8L661.3 112.1L662.8 111.5L664.3 110.8L665.8 110.2L667.4 109.5L668.9 108.9L670.3 108.3L671.8 107.7L673.2 107.1L674.6 106.6L676.0 106.1L677.3 105.6L678.7 105.1L680.0 104.6L681.3 104.2L682.5 103.7L683.8 103.3L685.0 102.9L686.2 102.6L687.4 102.2L688.6 101.9L689.7 101.5L690.9 101.2L692.1 101.0L693.3 100.7L694.5 100.5L695.6 100.3L696.8 100.1L697.8 99.9L698.8 99.7L699.7 99.6L700.6 99.4L701.2 99.3L701.8 99.2M380.0 137.6L560.0 137.6M380.0 135.4L560.0 135.4M560.0 137.6L560.4 137.6L560.9 137.6L561.4 137.6L562.0 137.6L562.6 137.6L563.3 137.6L564.1 137.6L565.0 137.6L566.1 137.6L567.2 137.6L568.5 137.6L570.0 137.6L571.7 137.6L573.6 137.6L575.8 137.6L578.1 137.6L580.5 137.7L583.0 137.7L585.5 137.7L588.0 137.7L590.5 137.7L592.8 137.6L595.0 137.6L597.0 137.5L598.9 137.4L600.5 137.3L602.1 137.2L603.6 137.1L605.0 137.0L606.4 136.8L607.8 136.7L609.2 136.5L610.6 136.3L612.0 136.0L613.6 135.7L615.2 135.4L617.0 135.0L618.8 134.6L620.6 134.1L622.6 133.6L624.5 133.1L626.5 132.5L628.4 132.0L630.4 131.4L632.3 130.8L634.2 130.1L636.1 129.5L637.9 128.8L639.6 128.2L641.4 127.5L643.1 126.7L644.7 126.0L646.4 125.2L648.0 124.4L649.6 123.7L651.2 122.9L652.8 122.1L654.4 121.3L655.9 120.5L657.5 119.8L659.0 119.0L660.6 118.3L662.2 117.5L663.7 116.7L665.3 115.9L666.8 115.1L668.3 114.3L669.8 113.6L671.2 112.9L672.7 112.1L674.1 111.5L675.5 110.8L676.8 110.2L678.2 109.5L679.5 108.9L680.8 108.3L682.0 107.8L683.3 107.2L684.5 106.7L685.7 106.2L686.9 105.7L688.0 105.3L689.2 104.8L690.3 104.4L691.5 104.1L692.7 103.7L694.0 103.4L695.2 103.1L696.5 102.8L697.7 102.6L698.8 102.3L699.9 102.1L700.9 101.9L701.8 101.8L702.6 101.6L703.2 101.5M560.0 135.4L560.4 135.4L560.9 135.4L561.4 135.4L562.0 135.4L562.6 135.4L563.3 135.4L564.1 135.4L565.0 135.4L566.1 135.4L567.2 135.4L568.5 135.4L570.0 135.4L571.7 135.4L573.6 135.4L575.8 135.4L578.1 135.4L580.5 135.5L583.0 135.5L585.5 135.5L588.0 135.5L590.5 135.5L592.8 135.4L595.0 135.4L597.0 135.3L598.7 135.2L600.4 135.1L602.0 135.0L603.4 134.9L604.8 134.8L606.2 134.7L607.5 134.5L608.8 134.3L610.2 134.1L611.6 133.8L613.2 133.6L614.8 133.2L616.5 132.8L618.3 132.4L620.1 132.0L622.0 131.5L623.9 131.0L625.9 130.4L627.8 129.9L629.7 129.3L631.6 128.7L633.5 128.0L635.4 127.4L637.1 126.8L638.8 126.1L640.5 125.4L642.2 124.7L643.8 124.0L645.4 123.2L647.1 122.5L648.6 121.7L650.2 120.9L651.8 120.1L653.4 119.3L655.0 118.6L656.5 117.8L658.1 117.1L659.6 116.3L661.2 115.5L662.7 114.7L664.3 113.9L665.8 113.2L667.3 112.4L668.8 111.6L670.3 110.9L671.7 110.2L673.1 109.5L674.5 108.8L675.9 108.2L677.2 107.5L678.5 106.9L679.8 106.3L681.1 105.8L682.4 105.2L683.6 104.7L684.8 104.2L686.1 103.7L687.3 103.2L688.5 102.8L689.7 102.4L690.9 102.0L692.1 101.6L693.4 101.3L694.7 101.0L696.0 100.7L697.2 100.4L698.4 100.2L699.5 100.0L700.5 99.8L701.4 99.6L702.2 99.5L702.8 99.3M702.1 101.3L702.8 101.3L703.8 101.2L704.9 101.1L706.1 101.1L707.4 101.0L708.9 100.9L710.3 100.9L711.8 100.8L713.3 100.7L714.8 100.7L716.2 100.7L717.5 100.7L718.7 100.7L720.0 100.7L721.2 100.7L722.4 100.7L723.6 100.8L724.8 100.8L726.0 100.9L727.2 101.0L728.4 101.1L729.6 101.3L730.9 101.6L732.2 101.9L733.6 102.2L735.1 102.7L736.6 103.2L738.1 103.8L739.7 104.4L741.3 105.0L742.8 105.7L744.4 106.4L745.9 107.1L747.3 107.8L748.7 108.5L750.0 109.2L751.2 109.8L752.3 110.5L753.3 111.2L754.4 111.9L755.3 112.7L756.3 113.4L757.2 114.1L758.1 114.9L759.0 115.6L760.0 116.4L760.9 117.1L761.8 117.9L762.8 118.6L763.7 119.3L764.6 120.0L765.5 120.6L766.4 121.3L767.2 122.0L768.1 122.6L768.9 123.3L769.8 124.0L770.6 124.8L771.4 125.6L772.2 126.4L773.0 127.2L773.9 128.1L774.7 129.1L775.6 130.0L776.4 131.0L777.2 132.0L778.0 133.0L778.8 134.0L779.5 135.0L780.2 136.1L780.8 137.1L781.4 138.1L782.0 139.2L782.5 140.2L783.0 141.3L783.4 142.5L783.9 143.6L784.3 144.7L784.6 145.8L785.0 147.0L785.3 148.1L785.6 149.2L785.9 150.2L786.1 151.3L786.4 152.2L786.5 153.1L786.7 153.9L786.8 154.7L786.9 155.5L787.0 156.3L787.1 157.1L787.1 158.0L787.2 158.9L787.2 159.8L787.3 160.9L787.3 162.0L787.3 163.3L787.4 164.8L787.4 166.4L787.4 168.2L787.4 169.9L787.4 171.7L787.4 173.4L787.4 175.1L787.4 176.6L787.4 178.0L787.4 179.1L787.4 180.0M701.9 99.1L702.7 99.1L703.6 99.0L704.7 99.0L706.0 98.9L707.3 98.8L708.8 98.7L710.2 98.7L711.8 98.6L713.3 98.5L714.7 98.5L716.2 98.5L717.5 98.5L718.8 98.5L720.0 98.5L721.2 98.5L722.4 98.5L723.7 98.6L724.9 98.6L726.1 98.7L727.4 98.8L728.7 98.9L730.0 99.1L731.4 99.4L732.8 99.7L734.2 100.1L735.7 100.6L737.3 101.1L738.9 101.7L740.5 102.4L742.1 103.0L743.7 103.7L745.3 104.4L746.8 105.1L748.3 105.8L749.7 106.5L751.0 107.2L752.3 107.9L753.5 108.7L754.6 109.4L755.6 110.1L756.7 110.9L757.6 111.7L758.6 112.4L759.5 113.2L760.4 113.9L761.4 114.7L762.3 115.4L763.2 116.1L764.1 116.8L765.0 117.5L765.9 118.2L766.8 118.9L767.7 119.6L768.6 120.2L769.5 120.9L770.3 121.6L771.2 122.4L772.1 123.2L772.9 124.0L773.8 124.8L774.6 125.7L775.5 126.6L776.4 127.6L777.2 128.6L778.1 129.6L778.9 130.6L779.7 131.7L780.5 132.7L781.3 133.8L782.0 134.9L782.7 136.0L783.4 137.1L784.0 138.2L784.5 139.3L785.0 140.5L785.5 141.7L785.9 142.8L786.4 144.0L786.7 145.2L787.1 146.3L787.4 147.5L787.7 148.6L788.0 149.7L788.3 150.7L788.5 151.7L788.7 152.7L788.9 153.6L789.0 154.4L789.1 155.3L789.2 156.1L789.3 157.0L789.3 157.8L789.4 158.8L789.4 159.7L789.4 160.8L789.5 162.0L789.5 163.3L789.6 164.8L789.6 166.4L789.6 168.1L789.6 169.9L789.6 171.7L789.6 173.4L789.6 175.1L789.6 176.6L789.6 178.0L789.6 179.1L789.6 180.0M749.8 109.1L750.4 109.5L751.2 110.1L752.1 110.8L753.1 111.5L754.2 112.3L755.4 113.2L756.5 114.1L757.7 115.0L758.8 115.9L759.9 116.8L760.9 117.6L761.7 118.4L762.5 119.2L763.2 119.9L763.9 120.7L764.5 121.4L765.2 122.1L765.8 122.9L766.3 123.7L766.9 124.4L767.4 125.2L768.0 126.0L768.5 126.8L769.1 127.6L769.6 128.4L770.2 129.3L770.7 130.1L771.3 130.9L771.8 131.8L772.3 132.6L772.8 133.5L773.3 134.3L773.7 135.2L774.2 136.1L774.6 137.0L775.0 138.0L775.3 139.0L775.7 140.0L776.0 141.1L776.4 142.2L776.7 143.4L776.9 144.5L777.2 145.7L777.5 146.8L777.7 148.0L777.9 149.1L778.1 150.2L778.3 151.2L778.5 152.2L778.6 153.1L778.7 153.9L778.8 154.7L778.9 155.5L779.0 156.3L779.1 157.1L779.1 158.0L779.2 158.9L779.2 159.8L779.3 160.9L779.3 162.0L779.3 163.3L779.4 164.8L779.4 166.4L779.4 168.2L779.4 169.9L779.4 171.7L779.4 173.4L779.4 175.1L779.4 176.6L779.4 178.0L779.4 179.1L779.5 180.0M751.2 107.3L751.8 107.8L752.5 108.3L753.4 109.0L754.4 109.8L755.5 110.6L756.7 111.4L757.9 112.3L759.1 113.3L760.2 114.2L761.3 115.1L762.4 116.0L763.3 116.8L764.1 117.6L764.8 118.4L765.5 119.2L766.2 120.0L766.9 120.8L767.5 121.6L768.1 122.3L768.7 123.1L769.2 123.9L769.8 124.7L770.4 125.6L770.9 126.4L771.5 127.2L772.0 128.1L772.6 128.9L773.1 129.8L773.7 130.6L774.2 131.5L774.7 132.4L775.2 133.3L775.7 134.2L776.2 135.2L776.6 136.2L777.0 137.2L777.4 138.3L777.8 139.4L778.1 140.5L778.5 141.7L778.8 142.8L779.1 144.0L779.4 145.2L779.6 146.4L779.9 147.5L780.1 148.7L780.3 149.8L780.5 150.8L780.7 151.8L780.8 152.7L780.9 153.6L781.0 154.5L781.1 155.3L781.2 156.1L781.3 157.0L781.3 157.8L781.4 158.8L781.4 159.7L781.5 160.8L781.5 162.0L781.5 163.3L781.6 164.8L781.6 166.4L781.6 168.1L781.6 169.9L781.6 171.7L781.6 173.4L781.6 175.1L781.6 176.6L781.6 178.0L781.6 179.1L781.6 180.0M787.4 180.0L787.4 432.0M789.6 180.0L789.6 432.0M779.4 180.0L779.4 432.0M781.6 180.0L781.6 432.0M779.5 179.7L779.4 180.2L779.2 180.8L779.0 181.6L778.8 182.4L778.6 183.3L778.3 184.2L778.1 185.2L777.9 186.2L777.6 187.1L777.4 188.1L777.1 188.9L776.9 189.7L776.7 190.4L776.6 191.1L776.4 191.8L776.2 192.4L776.0 193.1L775.8 193.7L775.6 194.3L775.4 195.0L775.3 195.6L775.1 196.3L774.9 197.0L774.7 197.8L774.6 198.5L774.4 199.3L774.2 200.1L774.1 201.0L773.9 201.8L773.7 202.7L773.6 203.5L773.4 204.4L773.3 205.3L773.1 206.1L773.0 207.0L772.9 207.9L772.8 208.7L772.7 209.5L772.6 210.3L772.5 211.1L772.5 211.9L772.4 212.7L772.3 213.5L772.3 214.3L772.2 215.2L772.2 216.1L772.1 217.0L772.1 218.0L772.1 219.0L772.1 220.3L772.0 221.5L772.0 222.9L772.0 224.3L772.1 225.6L772.1 227.0L772.1 228.2L772.1 229.4L772.1 230.4L772.1 231.3L772.1 232.0M781.6 180.3L781.5 180.8L781.3 181.4L781.2 182.1L780.9 182.9L780.7 183.8L780.5 184.8L780.2 185.7L780.0 186.7L779.7 187.7L779.5 188.6L779.3 189.5L779.1 190.3L778.9 191.0L778.7 191.7L778.5 192.4L778.3 193.1L778.1 193.7L777.9 194.3L777.7 194.9L777.6 195.6L777.4 196.2L777.2 196.8L777.0 197.5L776.9 198.2L776.7 199.0L776.5 199.8L776.4 200.6L776.2 201.4L776.1 202.2L775.9 203.1L775.7 203.9L775.6 204.8L775.5 205.6L775.3 206.5L775.2 207.3L775.1 208.1L775.0 209.0L774.9 209.7L774.8 210.5L774.7 211.3L774.7 212.1L774.6 212.8L774.5 213.6L774.5 214.4L774.4 215.3L774.4 216.2L774.3 217.1L774.3 218.0L774.3 219.1L774.3 220.3L774.2 221.6L774.2 222.9L774.2 224.3L774.2 225.6L774.3 226.9L774.3 228.2L774.3 229.4L774.3 230.4L774.3 231.3L774.3 232.0M772.1 232.0L772.1 432.0M774.3 232.0L774.3 432.0" fill="none" stroke="#3a3a3a" stroke-width="0.78"/>
<path d="M135.1 215.6L134.9 219.6M194.7 189.5L197.3 192.5M261.1 145.7L262.9 149.3M305.1 134.6L305.9 138.6M136.1 223.6L135.9 227.6M200.7 195.5L203.3 198.5M247.5 159.3L249.5 162.7M289.7 144.6L290.3 148.6M289.3 131.7L290.7 135.5M334.7 119.2L335.3 123.2M249.2 130.4L250.8 134.0M312.0 113.3L313.0 117.1M354.4 103.7L354.6 107.7M249.2 135.4L250.8 139.0M311.5 118.3L312.5 122.1M374.0 110.3L374.0 114.3M372.0 103.6L372.0 107.6M622.7 107.2L623.3 111.2M658.2 102.6L658.8 106.6M622.7 113.6L623.3 117.6M658.0 105.7L659.0 109.5M619.1 124.4L619.9 128.4M656.3 113.1L657.7 116.9M614.6 132.3L615.4 136.3M656.1 117.0L657.9 120.6M717.5 97.6L717.5 101.6M763.7 115.4L761.3 118.6M789.1 150.5L785.3 151.5M777.9 136.9L774.1 138.3M775.2 218.1L771.2 217.9M778.6 160.0h4M778.6 168.4h4M778.6 198.0h4M778.6 425.0h4M786.5 160.0h4M786.5 168.4h4M786.5 289.5h4M786.5 395.0h4M429.4 110.2v4M542.4 110.2v4M512.5 116.4v4M483.0 128.7v4M524.0 128.7v4M484.0 134.5v4M525.0 134.5v4M566.6 134.5v4M421.4 103.6v4" fill="none" stroke="#111" stroke-width="0.7"/>
<path d="M533.4 104.1l2.4 1.5l-2.4 1.5" fill="none" stroke="#333" stroke-width="0.6"/>
<path d="M218.6 161l-2.8 2.2l3.4 0.6" fill="none" stroke="#333" stroke-width="0.6"/>
<path d="M787.1 430.4l1.4 2l1.4-2" fill="none" stroke="#333" stroke-width="0.6"/>
<g transform="translate(321.6 116.0) rotate(-17)"><path d="M-6.5 -0.7L6.5 0.7M-6.5 0.7L6.5 -0.7M-4.3 -1v2M-2.1 -1v2M0 -1v2M2.1 -1v2M4.3 -1v2" stroke="#1c1c1c" stroke-width="0.6" fill="none"/></g>
<g transform="translate(293.4 140.2) rotate(-16)"><path d="M-6.0 -0.7L6.0 0.7M-6.0 0.7L6.0 -0.7M-4.0 -1v2M-2.0 -1v2M0 -1v2M2.0 -1v2M4.0 -1v2" stroke="#1c1c1c" stroke-width="0.6" fill="none"/></g>
<g transform="translate(381.0 111.4) rotate(-10)"><path d="M-6.5 -0.7L6.5 0.7M-6.5 0.7L6.5 -0.7M-4.3 -1v2M-2.1 -1v2M0 -1v2M2.1 -1v2M4.3 -1v2" stroke="#1c1c1c" stroke-width="0.6" fill="none"/></g>
<g transform="translate(264.0 127.6) rotate(-22)"><path d="M-4.0 -0.7L4.0 0.7M-4.0 0.7L4.0 -0.7M-2.6 -1v2M-1.3 -1v2M0 -1v2M1.3 -1v2M2.6 -1v2" stroke="#1c1c1c" stroke-width="0.6" fill="none"/></g>
<g transform="translate(271.0 143.8) rotate(-27)"><path d="M-4.0 -0.7L4.0 0.7M-4.0 0.7L4.0 -0.7M-2.6 -1v2M-1.3 -1v2M0 -1v2M1.3 -1v2M2.6 -1v2" stroke="#1c1c1c" stroke-width="0.6" fill="none"/></g>
<g transform="translate(273.0 150.2) rotate(-20)"><path d="M-4.0 -0.7L4.0 0.7M-4.0 0.7L4.0 -0.7M-2.6 -1v2M-1.3 -1v2M0 -1v2M1.3 -1v2M2.6 -1v2" stroke="#1c1c1c" stroke-width="0.6" fill="none"/></g>
<g transform="translate(664.0 104.4) rotate(-9)"><path d="M-4.0 -0.7L4.0 0.7M-4.0 0.7L4.0 -0.7M-2.6 -1v2M-1.3 -1v2M0 -1v2M1.3 -1v2M2.6 -1v2" stroke="#1c1c1c" stroke-width="0.6" fill="none"/></g>
<g transform="translate(664.0 112.6) rotate(-22)"><path d="M-4.0 -0.7L4.0 0.7M-4.0 0.7L4.0 -0.7M-2.6 -1v2M-1.3 -1v2M0 -1v2M1.3 -1v2M2.6 -1v2" stroke="#1c1c1c" stroke-width="0.6" fill="none"/></g>
<g transform="translate(708.0 100.2) rotate(-3)"><path d="M-4.0 -0.7L4.0 0.7M-4.0 0.7L4.0 -0.7M-2.6 -1v2M-1.3 -1v2M0 -1v2M1.3 -1v2M2.6 -1v2" stroke="#1c1c1c" stroke-width="0.6" fill="none"/></g>
<g transform="translate(779.8 178.0) rotate(82)"><path d="M-4.0 -0.7L4.0 0.7M-4.0 0.7L4.0 -0.7M-2.6 -1v2M-1.3 -1v2M0 -1v2M1.3 -1v2M2.6 -1v2" stroke="#1c1c1c" stroke-width="0.6" fill="none"/></g>
<g transform="translate(187.6 170.8) rotate(-29)"><rect x="-14.8" y="-7" width="29.6" height="14" fill="#808080" stroke="#1e1e1e" stroke-width="0.9"/><path d="M-9.4 -2.6H14.8M-9.4 2.6H14.8" stroke="#333" stroke-width="0.7"/></g>
<rect x="518.1" y="141.3" width="52.5" height="16.6" fill="#808080" stroke="#2e2e2e" stroke-width="0.8"/><path d="M518.1 141.3l2.6 8.2l-2.6 8.4M570.6 141.3l-2.6 8.2l2.6 8.4M520.7 149.5h47.3" stroke="#2e2e2e" stroke-width="0.6" fill="none"/>
<polygon points="64.1,87.5 794.8,87.5 794.8,433.8 733.1,433.8 733.1,210.9 700.0,211.0 646.5,174.0 300.0,161.0 237.3,186.0 237.3,235.7 64.0,235.7" fill="none" stroke="#0000ff" stroke-width="1.9" stroke-linejoin="miter"/>
<g transform="translate(77.5 93.8) rotate(0) scale(0.980)" fill="#008000" stroke="#000a00" stroke-width="0.80"><circle cx="-1.5" cy="-1.7" r="8.2"/><circle cx="3.4" cy="-4.4" r="5"/><circle cx="-3.2" cy="4.1" r="5.9"/><circle cx="2.4" cy="4.9" r="4.8"/><circle cx="4.3" cy="0.8" r="5.5"/></g>
<g transform="translate(76.4 111.6) rotate(0) scale(0.980)" fill="#008000" stroke="#000a00" stroke-width="0.80"><circle cx="-1.5" cy="-1.7" r="8.2"/><circle cx="3.4" cy="-4.4" r="5"/><circle cx="-3.2" cy="4.1" r="5.9"/><circle cx="2.4" cy="4.9" r="4.8"/><circle cx="4.3" cy="0.8" r="5.5"/></g>
<g transform="translate(95.0 103.8) rotate(0) scale(0.920)" fill="#008000" stroke="#000a00" stroke-width="0.85"><circle cx="-1.5" cy="-1.7" r="8.2"/><circle cx="3.4" cy="-4.4" r="5"/><circle cx="-3.2" cy="4.1" r="5.9"/><circle cx="2.4" cy="4.9" r="4.8"/><circle cx="4.3" cy="0.8" r="5.5"/></g>
<g transform="translate(101.2 114.3) rotate(0) scale(0.920)" fill="#008000" stroke="#000a00" stroke-width="0.85"><circle cx="-1.5" cy="-1.7" r="8.2"/><circle cx="3.4" cy="-4.4" r="5"/><circle cx="-3.2" cy="4.1" r="5.9"/><circle cx="2.4" cy="4.9" r="4.8"/><circle cx="4.3" cy="0.8" r="5.5"/></g>
<g transform="translate(120.0 100.0) rotate(0) scale(0.920)" fill="#008000" stroke="#000a00" stroke-width="0.85"><circle cx="-1.5" cy="-1.7" r="8.2"/><circle cx="3.4" cy="-4.4" r="5"/><circle cx="-3.2" cy="4.1" r="5.9"/><circle cx="2.4" cy="4.9" r="4.8"/><circle cx="4.3" cy="0.8" r="5.5"/></g>
<g transform="translate(120.0 113.8) rotate(0) scale(0.900)" fill="#008000" stroke="#000a00" stroke-width="0.87"><circle cx="-1.5" cy="-1.7" r="8.2"/><circle cx="3.4" cy="-4.4" r="5"/><circle cx="-3.2" cy="4.1" r="5.9"/><circle cx="2.4" cy="4.9" r="4.8"/><circle cx="4.3" cy="0.8" r="5.5"/></g>
<g transform="translate(138.0 100.0) rotate(0) scale(0.920)" fill="#008000" stroke="#000a00" stroke-width="0.85"><circle cx="-1.5" cy="-1.7" r="8.2"/><circle cx="3.4" cy="-4.4" r="5"/><circle cx="-3.2" cy="4.1" r="5.9"/><circle cx="2.4" cy="4.9" r="4.8"/><circle cx="4.3" cy="0.8" r="5.5"/></g>
<g transform="translate(160.9 96.7) rotate(0) scale(1.000)" fill="#008000" stroke="#000a00" stroke-width="0.78"><circle cx="0" cy="-2.6" r="3.1"/><circle cx="-2.7" cy="0" r="3.1"/><circle cx="2.7" cy="0" r="3.1"/><circle cx="0" cy="2.3" r="3.5"/></g>
<g transform="translate(181.2 99.7) rotate(0) scale(1.000)" fill="#008000" stroke="#000a00" stroke-width="0.78"><circle cx="0" cy="-2.6" r="3.1"/><circle cx="-2.7" cy="0" r="3.1"/><circle cx="2.7" cy="0" r="3.1"/><circle cx="0" cy="2.3" r="3.5"/></g>
<g transform="translate(166.7 108.7) rotate(0) scale(1.000)" fill="#008000" stroke="#000a00" stroke-width="0.78"><circle cx="0" cy="-2.6" r="3.1"/><circle cx="-2.7" cy="0" r="3.1"/><circle cx="2.7" cy="0" r="3.1"/><circle cx="0" cy="2.3" r="3.5"/></g>
<g transform="translate(138.0 118.0) rotate(0) scale(0.880)" fill="#008000" stroke="#000a00" stroke-width="0.89"><circle cx="-1.5" cy="-1.7" r="8.2"/><circle cx="3.4" cy="-4.4" r="5"/><circle cx="-3.2" cy="4.1" r="5.9"/><circle cx="2.4" cy="4.9" r="4.8"/><circle cx="4.3" cy="0.8" r="5.5"/></g>
<g transform="translate(156.0 118.0) rotate(0) scale(0.880)" fill="#008000" stroke="#000a00" stroke-width="0.89"><circle cx="-1.5" cy="-1.7" r="8.2"/><circle cx="3.4" cy="-4.4" r="5"/><circle cx="-3.2" cy="4.1" r="5.9"/><circle cx="2.4" cy="4.9" r="4.8"/><circle cx="4.3" cy="0.8" r="5.5"/></g>
<g transform="translate(163.0 128.0) rotate(0) scale(0.940)" fill="#008000" stroke="#000a00" stroke-width="0.83"><circle cx="-1.5" cy="-1.7" r="8.2"/><circle cx="3.4" cy="-4.4" r="5"/><circle cx="-3.2" cy="4.1" r="5.9"/><circle cx="2.4" cy="4.9" r="4.8"/><circle cx="4.3" cy="0.8" r="5.5"/></g>
<g transform="translate(182.0 121.0) rotate(0) scale(0.960)" fill="#008000" stroke="#000a00" stroke-width="0.81"><circle cx="-1.5" cy="-1.7" r="8.2"/><circle cx="3.4" cy="-4.4" r="5"/><circle cx="-3.2" cy="4.1" r="5.9"/><circle cx="2.4" cy="4.9" r="4.8"/><circle cx="4.3" cy="0.8" r="5.5"/></g>
<g transform="translate(181.0 137.0) rotate(0) scale(0.960)" fill="#008000" stroke="#000a00" stroke-width="0.81"><circle cx="-1.5" cy="-1.7" r="8.2"/><circle cx="3.4" cy="-4.4" r="5"/><circle cx="-3.2" cy="4.1" r="5.9"/><circle cx="2.4" cy="4.9" r="4.8"/><circle cx="4.3" cy="0.8" r="5.5"/></g>
<g transform="translate(138.8 132.5) rotate(0) scale(0.880)" fill="#008000" stroke="#000a00" stroke-width="0.89"><circle cx="-1.5" cy="-1.7" r="8.2"/><circle cx="3.4" cy="-4.4" r="5"/><circle cx="-3.2" cy="4.1" r="5.9"/><circle cx="2.4" cy="4.9" r="4.8"/><circle cx="4.3" cy="0.8" r="5.5"/></g>
<g transform="translate(75.0 130.5) rotate(0) scale(0.814)" fill="#008000" stroke="#000a00" stroke-width="0.96"><circle cx="0" cy="-2.6" r="3.1"/><circle cx="-2.7" cy="0" r="3.1"/><circle cx="2.7" cy="0" r="3.1"/><circle cx="0" cy="2.3" r="3.5"/></g>
<g transform="translate(96.0 123.0) rotate(0) scale(0.814)" fill="#008000" stroke="#000a00" stroke-width="0.96"><circle cx="0" cy="-2.6" r="3.1"/><circle cx="-2.7" cy="0" r="3.1"/><circle cx="2.7" cy="0" r="3.1"/><circle cx="0" cy="2.3" r="3.5"/></g>
<g transform="translate(78.8 138.8) rotate(0) scale(0.920)" fill="#008000" stroke="#000a00" stroke-width="0.85"><circle cx="-1.5" cy="-1.7" r="8.2"/><circle cx="3.4" cy="-4.4" r="5"/><circle cx="-3.2" cy="4.1" r="5.9"/><circle cx="2.4" cy="4.9" r="4.8"/><circle cx="4.3" cy="0.8" r="5.5"/></g>
<g transform="translate(91.0 135.0) rotate(0) scale(0.960)" fill="#008000" stroke="#000a00" stroke-width="0.81"><circle cx="-1.5" cy="-1.7" r="8.2"/><circle cx="3.4" cy="-4.4" r="5"/><circle cx="-3.2" cy="4.1" r="5.9"/><circle cx="2.4" cy="4.9" r="4.8"/><circle cx="4.3" cy="0.8" r="5.5"/></g>
<g transform="translate(101.8 136.0) rotate(0) scale(0.847)" fill="#008000" stroke="#000a00" stroke-width="0.92"><circle cx="0" cy="-2.6" r="3.1"/><circle cx="-2.7" cy="0" r="3.1"/><circle cx="2.7" cy="0" r="3.1"/><circle cx="0" cy="2.3" r="3.5"/></g>
<g transform="translate(122.0 133.0) rotate(0) scale(0.860)" fill="#008000" stroke="#000a00" stroke-width="0.91"><circle cx="-1.5" cy="-1.7" r="8.2"/><circle cx="3.4" cy="-4.4" r="5"/><circle cx="-3.2" cy="4.1" r="5.9"/><circle cx="2.4" cy="4.9" r="4.8"/><circle cx="4.3" cy="0.8" r="5.5"/></g>
<g transform="translate(115.8 134.2) rotate(0) scale(0.847)" fill="#008000" stroke="#000a00" stroke-width="0.92"><circle cx="0" cy="-2.6" r="3.1"/><circle cx="-2.7" cy="0" r="3.1"/><circle cx="2.7" cy="0" r="3.1"/><circle cx="0" cy="2.3" r="3.5"/></g>
<g transform="translate(76.0 157.5) rotate(0) scale(0.880)" fill="#008000" stroke="#000a00" stroke-width="0.89"><circle cx="-1.5" cy="-1.7" r="8.2"/><circle cx="3.4" cy="-4.4" r="5"/><circle cx="-3.2" cy="4.1" r="5.9"/><circle cx="2.4" cy="4.9" r="4.8"/><circle cx="4.3" cy="0.8" r="5.5"/></g>
<g transform="translate(91.0 159.5) rotate(0) scale(0.880)" fill="#008000" stroke="#000a00" stroke-width="0.89"><circle cx="-1.5" cy="-1.7" r="8.2"/><circle cx="3.4" cy="-4.4" r="5"/><circle cx="-3.2" cy="4.1" r="5.9"/><circle cx="2.4" cy="4.9" r="4.8"/><circle cx="4.3" cy="0.8" r="5.5"/></g>
<g transform="translate(108.8 150.0) rotate(0) scale(0.949)" fill="#008000" stroke="#000a00" stroke-width="0.82"><circle cx="0" cy="-2.6" r="3.1"/><circle cx="-2.7" cy="0" r="3.1"/><circle cx="2.7" cy="0" r="3.1"/><circle cx="0" cy="2.3" r="3.5"/></g>
<g transform="translate(121.8 147.0) rotate(0) scale(0.949)" fill="#008000" stroke="#000a00" stroke-width="0.82"><circle cx="0" cy="-2.6" r="3.1"/><circle cx="-2.7" cy="0" r="3.1"/><circle cx="2.7" cy="0" r="3.1"/><circle cx="0" cy="2.3" r="3.5"/></g>
<g transform="translate(137.5 150.8) rotate(0) scale(0.949)" fill="#008000" stroke="#000a00" stroke-width="0.82"><circle cx="0" cy="-2.6" r="3.1"/><circle cx="-2.7" cy="0" r="3.1"/><circle cx="2.7" cy="0" r="3.1"/><circle cx="0" cy="2.3" r="3.5"/></g>
<g transform="translate(151.0 148.8) rotate(0) scale(0.949)" fill="#008000" stroke="#000a00" stroke-width="0.82"><circle cx="0" cy="-2.6" r="3.1"/><circle cx="-2.7" cy="0" r="3.1"/><circle cx="2.7" cy="0" r="3.1"/><circle cx="0" cy="2.3" r="3.5"/></g>
<g transform="translate(109.0 164.5) rotate(0) scale(0.949)" fill="#008000" stroke="#000a00" stroke-width="0.82"><circle cx="0" cy="-2.6" r="3.1"/><circle cx="-2.7" cy="0" r="3.1"/><circle cx="2.7" cy="0" r="3.1"/><circle cx="0" cy="2.3" r="3.5"/></g>
<g transform="translate(122.0 161.0) rotate(0) scale(0.949)" fill="#008000" stroke="#000a00" stroke-width="0.82"><circle cx="0" cy="-2.6" r="3.1"/><circle cx="-2.7" cy="0" r="3.1"/><circle cx="2.7" cy="0" r="3.1"/><circle cx="0" cy="2.3" r="3.5"/></g>
<g transform="translate(143.0 163.0) rotate(0) scale(0.949)" fill="#008000" stroke="#000a00" stroke-width="0.82"><circle cx="0" cy="-2.6" r="3.1"/><circle cx="-2.7" cy="0" r="3.1"/><circle cx="2.7" cy="0" r="3.1"/><circle cx="0" cy="2.3" r="3.5"/></g>
<g transform="translate(156.8 160.5) rotate(0) scale(0.949)" fill="#008000" stroke="#000a00" stroke-width="0.82"><circle cx="0" cy="-2.6" r="3.1"/><circle cx="-2.7" cy="0" r="3.1"/><circle cx="2.7" cy="0" r="3.1"/><circle cx="0" cy="2.3" r="3.5"/></g>
<g transform="translate(70.0 175.8) rotate(0) scale(0.920)" fill="#008000" stroke="#000a00" stroke-width="0.85"><circle cx="-1.5" cy="-1.7" r="8.2"/><circle cx="3.4" cy="-4.4" r="5"/><circle cx="-3.2" cy="4.1" r="5.9"/><circle cx="2.4" cy="4.9" r="4.8"/><circle cx="4.3" cy="0.8" r="5.5"/></g>
<g transform="translate(88.8 177.5) rotate(0) scale(0.880)" fill="#008000" stroke="#000a00" stroke-width="0.89"><circle cx="-1.5" cy="-1.7" r="8.2"/><circle cx="3.4" cy="-4.4" r="5"/><circle cx="-3.2" cy="4.1" r="5.9"/><circle cx="2.4" cy="4.9" r="4.8"/><circle cx="4.3" cy="0.8" r="5.5"/></g>
<g transform="translate(88.8 183.0) rotate(0) scale(0.780)" fill="#008000" stroke="#000a00" stroke-width="1.00"><circle cx="0" cy="-2.6" r="3.1"/><circle cx="-2.7" cy="0" r="3.1"/><circle cx="2.7" cy="0" r="3.1"/><circle cx="0" cy="2.3" r="3.5"/></g>
</g>
<rect x="57.30" y="454.60" width="10.20" height="10.80" fill="#f0f0f0"/><path d="M57.70 465.40v-10.40h9.80" stroke="#fff" stroke-width="0.8" fill="none"/><path d="M57.30 465.40h10.20v-10.80" stroke="#7a7a7a" stroke-width="1" fill="none"/><path d="M60.70 459.80l2.6 -2.2v4.4z" fill="#ddd" stroke="#666" stroke-width="0.5"/>
<rect x="775.30" y="454.60" width="10.20" height="10.80" fill="#f0f0f0"/><path d="M775.70 465.40v-10.40h9.80" stroke="#fff" stroke-width="0.8" fill="none"/><path d="M775.30 465.40h10.20v-10.80" stroke="#7a7a7a" stroke-width="1" fill="none"/><path d="M782.00 459.80l-3 -2.5v5z" fill="#222"/>
<rect x="787.60" y="52.00" width="11.00" height="11.20" fill="#f0f0f0"/><path d="M788.00 63.20v-10.80h10.60" stroke="#fff" stroke-width="0.8" fill="none"/><path d="M787.60 63.20h11.00v-11.20" stroke="#7a7a7a" stroke-width="1" fill="none"/><path d="M792.80 56.20l-2.7 2.4h5.4z" fill="#222"/>
<rect x="787.60" y="441.60" width="11.00" height="11.20" fill="#f0f0f0"/><path d="M788.00 452.80v-10.80h10.60" stroke="#fff" stroke-width="0.8" fill="none"/><path d="M787.60 452.80h11.00v-11.20" stroke="#7a7a7a" stroke-width="1" fill="none"/><path d="M792.80 448.20l-2.7 -2.4h5.4z" fill="#222"/>
<rect x="0" y="466.9" width="800" height="11" fill="#fdfdfd"/>
<rect x="0.00" y="468.2" width="61.60" height="9.1" fill="#f0f0f0"/><rect x="0.00" y="468.1" width="61.60" height="0.8" fill="#a6a6a6"/>
<rect x="63.80" y="468.2" width="690.00" height="9.1" fill="#f0f0f0"/><rect x="63.80" y="468.1" width="690.00" height="0.8" fill="#a6a6a6"/><rect x="63.80" y="468.1" width="0.7" height="9.2" fill="#a6a6a6"/>
<rect x="755.40" y="468.2" width="44.60" height="9.1" fill="#f0f0f0"/><rect x="755.40" y="468.1" width="44.60" height="0.8" fill="#a6a6a6"/><rect x="755.40" y="468.1" width="0.7" height="9.2" fill="#a6a6a6"/>
<path d="M1.4 470.4v4.6l1.2-1l0.9 1.8l0.7-0.4l-0.9-1.7h1.5z" fill="#fff" stroke="#111" stroke-width="0.5"/>
<text x="7.00" y="475.38" font-size="6.10" fill="#000" textLength="30.00" lengthAdjust="spacingAndGlyphs" stroke="#000" stroke-width="0.16" >2679; 2105</text>
<circle cx="758.8" cy="472.4" r="1.8" fill="none" stroke="#222" stroke-width="0.7"/><path d="M760 473.8l2.6 2.4" stroke="#222" stroke-width="0.9"/>
<text x="765.10" y="475.38" font-size="6.10" fill="#000" textLength="14.70" lengthAdjust="spacingAndGlyphs" stroke="#000" stroke-width="0.16" >0,22x</text>
<rect x="0" y="477.6" width="800" height="22.4" fill="#1c1c1e"/>
<rect x="137.4" y="477.6" width="25.2" height="22.4" fill="#3a3a3d"/><rect x="137.4" y="498.8" width="25.2" height="1.2" fill="#78b4ea"/>
<path d="M9 484.6l3.8-0.5v3.9H9zM13.4 484l4.8-0.7v4.7h-4.8zM9 488.6h3.8v3.9L9 492zM13.4 488.6h4.8v4.7l-4.8-0.7z" fill="#fff"/>
<rect x="36.6" y="485.6" width="5" height="5.8" fill="none" stroke="#fff" stroke-width="0.8"/><path d="M35 485.2v6.6M43.4 485.2v6.6" stroke="#fff" stroke-width="0.8" stroke-dasharray="2.2 2.2"/><path d="M41.6 488.5h2.4" stroke="#fff" stroke-width="0.7"/>
<circle cx="68.4" cy="488.6" r="6" fill="#1486d8"/><path d="M62.6 490q0.4-7 7-7q4.8 0.4 4.8 5h-7q-0.2 3 3.4 3.6q-6.6 2-8.2-1.6z" fill="#39c6a0" opacity="0.85"/><path d="M63 491q2-5 6-5q3 0 3.2 2h-4.6q-0.4 3.4 3.6 4.6q-5.4 1.6-8.2-1.6z" fill="#0b59b4"/>
<path d="M89.6 484h4l1 1.2h6.2v8.4h-11.2z" fill="#f4b62c"/><rect x="89.6" y="486.6" width="11.2" height="7" fill="#fbd661"/><rect x="92.6" y="490.4" width="5.2" height="3.2" fill="#3b8be0"/><rect x="93.8" y="491.6" width="2.8" height="2" fill="#fbd661"/>
<rect x="116" y="482.4" width="13.6" height="12.6" fill="#1c74e0"/><path d="M119 492.2h7.6" stroke="#fff" stroke-width="1"/><path d="M119.6 490.4l5.4-4.4l1.2 2.2z" fill="#fff"/>
<circle cx="149.6" cy="488.4" r="5.3" fill="#fbfbff" stroke="#2a2a60" stroke-width="0.9"/>
<text x="149.60" y="491.58" font-size="8.60" fill="url(#sg)" font-weight="bold" text-anchor="middle" >S</text>
<path d="M696.4 490l2.4-2.4l2.4 2.4" stroke="#fff" stroke-width="0.7" fill="none"/>
<path d="M709.4 491.4a5 5 0 0 1 5-5M711 491.4a3.4 3.4 0 0 1 3.4-3.4M712.6 491.4a1.8 1.8 0 0 1 1.8-1.8" stroke="#ddd" stroke-width="0.8" fill="none"/><path d="M714.6 485.8v5.8" stroke="#bbb" stroke-width="0.6"/>
<path d="M721.4 487.6h1.4l2-1.8v5.8l-2-1.8h-1.4z" fill="none" stroke="#fff" stroke-width="0.6"/><path d="M726.4 487a2.4 2.4 0 0 1 0 3.4M727.8 486a4 4 0 0 1 0 5.4" stroke="#fff" stroke-width="0.6" fill="none"/>
<text x="751.20" y="485.55" font-size="6.00" fill="#fff" textLength="15.00" lengthAdjust="spacingAndGlyphs" text-anchor="middle" stroke="#fff" stroke-width="0.16" >17:28</text>
<text x="750.90" y="495.55" font-size="6.00" fill="#fff" textLength="32.20" lengthAdjust="spacingAndGlyphs" text-anchor="middle" stroke="#fff" stroke-width="0.16" >09/03/2021</text>
<path d="M777.4 484.4h7.2v5.6h-2.6l-1.2 1.4l-1-1.4h-2.4z" fill="none" stroke="#fff" stroke-width="0.7"/>
<rect x="797" y="477.6" width="0.5" height="22.4" fill="#666"/>
<rect x="659.4" y="312.5" width="121.0" height="135.9" fill="#000" opacity="0.32" filter="url(#sh)"/>
<rect x="658.9" y="311.0" width="122.0" height="135.9" fill="#fff"/>
<text x="664.00" y="320.78" font-size="6.10" fill="#a4a4a4" textLength="16.00" lengthAdjust="spacingAndGlyphs" >Livelli</text>
<rect x="769.1" y="315" width="9.9" height="10.1" fill="#e5e5e5"/><path d="M773.4 319.2l1.8 1.8M775.2 319.2l-1.8 1.8" stroke="#bdbdbd" stroke-width="0.5"/>
<rect x="659.4" y="446.8" width="121.5" height="1.1" fill="#cfcfcf"/>
<rect x="659.5" y="328.3" width="120.4" height="8.2" fill="#ececec"/>
<path d="M659.5 336.5H779.9V328.3" stroke="#555" stroke-width="0.7" fill="none"/>
<path d="M659.7 336.5V328.3H779.9" stroke="#fff" stroke-width="0.6" fill="none"/>
<ellipse cx="665.8" cy="332.5" rx="2.5" ry="2" fill="#2b8ae0"/><circle cx="665.8" cy="332.5" r="0.6" fill="#bfe0ff"/><path d="M663.6 330.4l-0.8-0.6M668 330.4l0.8-0.6M665.8 330v-0.8" stroke="#2b8ae0" stroke-width="0.5"/>
<text x="676.60" y="334.79" font-size="6.40" fill="#000" textLength="15.40" lengthAdjust="spacingAndGlyphs" stroke="none">Nome</text>
<rect x="662.2" y="339.80" width="6.2" height="6.2" fill="#fff" stroke="#6a6a6a" stroke-width="0.85"/>
<path d="M671.2 343.00h2M672.2 342.00v2M671.5 342.30l1.4 1.4M672.9 342.30l-1.4 1.4" stroke="#111" stroke-width="0.5"/>
<text x="676.20" y="345.29" font-size="6.40" fill="#000" textLength="20.80" lengthAdjust="spacingAndGlyphs" stroke="none">Strato 0</text>
<rect x="675" y="347.95" width="105.90" height="8.8" fill="#0a6ad6"/>
<rect x="662.2" y="349.25" width="6.2" height="6.2" fill="#fff" stroke="#6a6a6a" stroke-width="0.85"/>
<path d="M663.4 352.25l1.5 1.7l2.5-3.4" stroke="#000" stroke-width="1.1" fill="none"/>
<path d="M671.2 352.45h2M672.2 351.45v2M671.5 351.75l1.4 1.4M672.9 351.75l-1.4 1.4" stroke="#111" stroke-width="0.5"/>
<text x="676.20" y="354.74" font-size="6.40" fill="#fff" textLength="20.80" lengthAdjust="spacingAndGlyphs" stroke="none">Strato 1</text>
<rect x="662.2" y="358.70" width="6.2" height="6.2" fill="#fff" stroke="#6a6a6a" stroke-width="0.85"/>
<text x="676.20" y="364.19" font-size="6.40" fill="#000" textLength="20.80" lengthAdjust="spacingAndGlyphs" stroke="none">Strato 2</text>
<rect x="662.2" y="368.15" width="6.2" height="6.2" fill="#fff" stroke="#6a6a6a" stroke-width="0.85"/>
<text x="676.20" y="373.64" font-size="6.40" fill="#000" textLength="20.80" lengthAdjust="spacingAndGlyphs" stroke="none">Strato 3</text>
<rect x="662.2" y="377.60" width="6.2" height="6.2" fill="#fff" stroke="#6a6a6a" stroke-width="0.85"/>
<text x="676.20" y="383.09" font-size="6.40" fill="#000" textLength="20.80" lengthAdjust="spacingAndGlyphs" stroke="none">Strato 4</text>
<rect x="662.2" y="387.05" width="6.2" height="6.2" fill="#fff" stroke="#6a6a6a" stroke-width="0.85"/>
<text x="676.20" y="392.54" font-size="6.40" fill="#000" textLength="20.80" lengthAdjust="spacingAndGlyphs" stroke="none">Strato 5</text>
<rect x="662.2" y="396.50" width="6.2" height="6.2" fill="#fff" stroke="#6a6a6a" stroke-width="0.85"/>
<text x="676.20" y="401.99" font-size="6.40" fill="#000" textLength="20.80" lengthAdjust="spacingAndGlyphs" stroke="none">Strato 6</text>
<rect x="662.2" y="405.95" width="6.2" height="6.2" fill="#fff" stroke="#6a6a6a" stroke-width="0.85"/>
<text x="676.20" y="411.44" font-size="6.40" fill="#000" textLength="20.80" lengthAdjust="spacingAndGlyphs" stroke="none">Strato 7</text>
<rect x="662.2" y="415.40" width="6.2" height="6.2" fill="#fff" stroke="#6a6a6a" stroke-width="0.85"/>
<text x="676.20" y="420.89" font-size="6.40" fill="#000" textLength="20.80" lengthAdjust="spacingAndGlyphs" stroke="none">Strato 8</text>
<rect x="662.2" y="424.85" width="6.2" height="6.2" fill="#fff" stroke="#6a6a6a" stroke-width="0.85"/>
<text x="676.20" y="430.34" font-size="6.40" fill="#000" textLength="20.80" lengthAdjust="spacingAndGlyphs" stroke="none">Strato 9</text>
<rect x="658.90" y="433.60" width="47.10" height="13.30" fill="#f0f0f0"/><path d="M659.30 446.90V434.00H706.00" stroke="#fff" stroke-width="0.8" fill="none"/><path d="M658.90 446.50H705.60V433.60" stroke="#5a5a5a" stroke-width="0.9" fill="none"/>
<rect x="706.00" y="433.60" width="45.20" height="13.30" fill="#f0f0f0"/><path d="M706.40 446.90V434.00H751.20" stroke="#fff" stroke-width="0.8" fill="none"/><path d="M706.00 446.50H750.80V433.60" stroke="#5a5a5a" stroke-width="0.9" fill="none"/>
<rect x="751.20" y="433.60" width="14.60" height="13.30" fill="#f0f0f0"/><path d="M751.60 446.90V434.00H765.80" stroke="#fff" stroke-width="0.8" fill="none"/><path d="M751.20 446.50H765.40V433.60" stroke="#5a5a5a" stroke-width="0.9" fill="none"/>
<rect x="765.80" y="433.60" width="15.10" height="13.30" fill="#f0f0f0"/><path d="M766.20 446.90V434.00H780.90" stroke="#fff" stroke-width="0.8" fill="none"/><path d="M765.80 446.50H780.50V433.60" stroke="#5a5a5a" stroke-width="0.9" fill="none"/>
<path d="M679.9 440h6.2M683 436.9v6.2" stroke="#12c012" stroke-width="1.8"/>
<path d="M726.4 440h6" stroke="#d81818" stroke-width="1.6"/>
<path d="M759 436.6l-3 3h1.8v3h2.4v-3h1.8z" fill="#1e8ae6"/>
<path d="M773 443l-3-3h1.8v-3h2.4v3h1.8z" fill="#1e8ae6"/>
</svg></body></html>
